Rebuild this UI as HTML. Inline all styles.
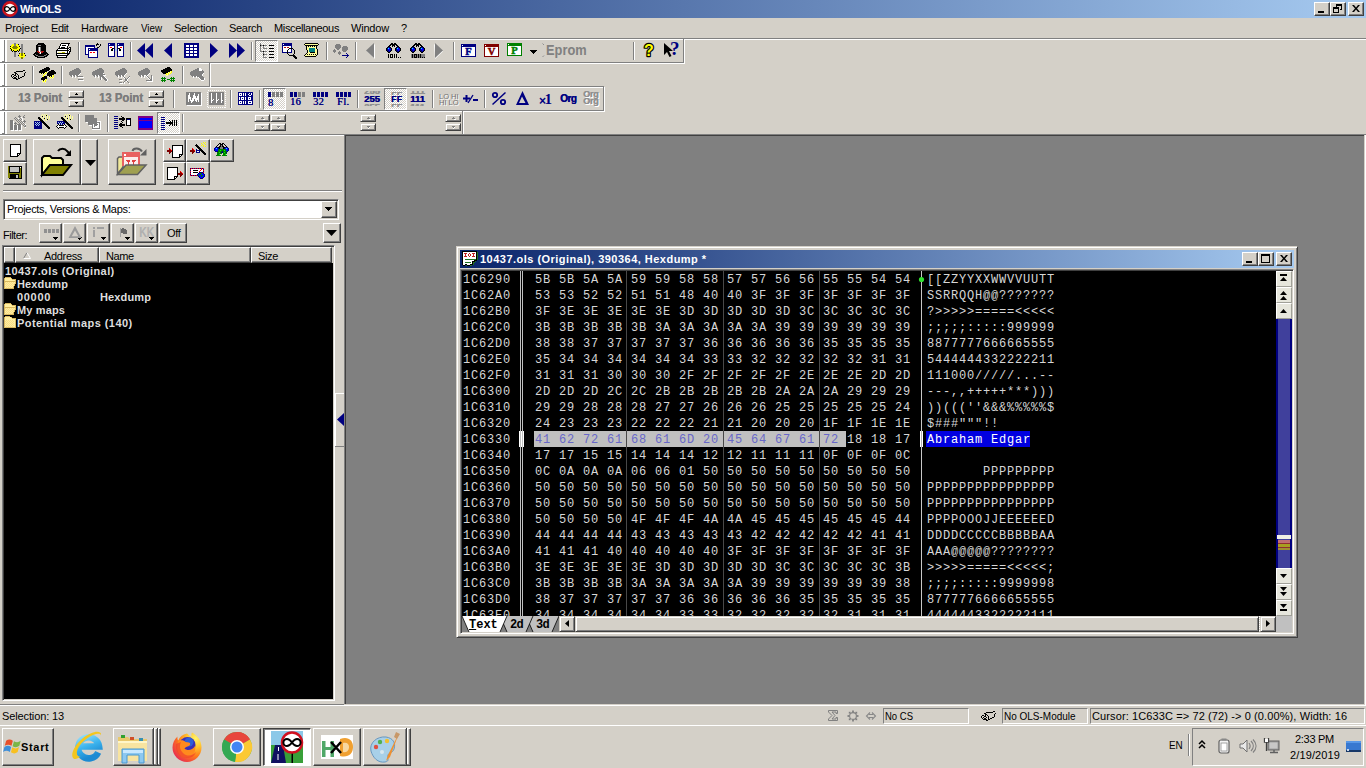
<!DOCTYPE html>
<html><head><meta charset="utf-8"><title>WinOLS</title>
<style>
*{box-sizing:border-box;margin:0;padding:0}
html,body{width:1366px;height:768px;overflow:hidden;background:#d4d0c8;font-family:"Liberation Sans",sans-serif;font-size:11px;color:#000}
.a{position:absolute}
.t{position:absolute;white-space:nowrap;line-height:13px}
.btn{position:absolute;background:#d4d0c8;border:1px solid;border-color:#fff #404040 #404040 #fff;box-shadow:inset -1px -1px 0 #808080}
.sb{position:absolute;background:#d4d0c8;border:1px solid;border-color:#d4d0c8 #404040 #404040 #d4d0c8;box-shadow:inset 1px 1px 0 #fff,inset -1px -1px 0 #808080}
.vb{position:absolute;background:#e6e6dc;border:1px solid;border-color:#fff #a0a098 #a0a098 #fff}
.sunk{position:absolute;border:1px solid;border-color:#808080 #fff #fff #808080;box-shadow:inset 1px 1px 0 #404040,inset -1px -1px 0 #d4d0c8}
.sunk1{position:absolute;border:1px solid;border-color:#808080 #fff #fff #808080}
.prs{position:absolute;border:1px solid;border-color:#808080 #fff #fff #808080;background-image:conic-gradient(#fff 25%,#d4d0c8 0 50%,#fff 0 75%,#d4d0c8 0);background-size:2px 2px}
.mono{font-family:"Liberation Mono",monospace;font-size:12px;letter-spacing:0.8px;line-height:16px;white-space:pre;position:absolute;color:#d6d6d6}
svg{position:absolute;overflow:visible}
</style></head><body>

<!-- TITLE BAR -->
<div class="a" style="left:0px;top:0px;width:1366px;height:18px;background:#0a246a;background:linear-gradient(90deg,#0a246a 0%,#a6caf0 100%);"></div>
<svg style="left:2px;top:1px;" width="16" height="16" viewBox="0 0 16 16"><circle cx="8" cy="8" r="6.6" fill="#fff" stroke="#c8141e" stroke-width="2.6"/><path d="M8 8c-1.2-1.7-2-2.3-3.1-2.3a2.3 2.3 0 0 0 0 4.6c1.1 0 1.9-.6 3.1-2.3c1.200 1.700 2 2.300 3.100 2.300a2.300 2.300 0 0 0 0-4.600c-1.100 0-1.900.600-3.100 2.300z" fill="none" stroke="#000" stroke-width="1.3"/></svg>
<div class="t" style="left:20px;top:3px;font-weight:bold;color:#fff;letter-spacing:-0.28px;">WinOLS</div>
<div class="btn" style="left:1314px;top:2px;width:16px;height:14px;"></div>
<div class="btn" style="left:1330px;top:2px;width:16px;height:14px;"></div>
<div class="btn" style="left:1348px;top:2px;width:16px;height:14px;"></div>
<div class="a" style="left:1318px;top:11px;width:6px;height:2px;background:#000;"></div>
<svg style="left:1333px;top:4px;" width="9" height="9" viewBox="0 0 9 9" shape-rendering="crispEdges"><path d="M3 0h6v6h-2v-1h1v-3h-4v1h-1z" fill="#000"/><path d="M0 3h6v6h-6zM1 5v3h4v-3z" fill="#000" fill-rule="evenodd"/></svg>
<svg style="left:1352px;top:5px;" width="8" height="7" viewBox="0 0 8 7"><path d="M0 0h2l2 2.500l2-2.500h2l-3 3.500l3 3.500h-2l-2-2.500l-2 2.500h-2l3-3.500z" fill="#000"/></svg>
<!-- MENU BAR -->
<div class="t" style="left:5px;top:22px;letter-spacing:-0.11px;">Project</div>
<div class="t" style="left:51px;top:22px;letter-spacing:-0.36px;">Edit</div>
<div class="t" style="left:81px;top:22px;letter-spacing:-0.09px;">Hardware</div>
<div class="t" style="left:141px;top:22px;transform:scaleX(0.888);transform-origin:0 0;">View</div>
<div class="t" style="left:174px;top:22px;letter-spacing:-0.25px;">Selection</div>
<div class="t" style="left:229px;top:22px;letter-spacing:-0.31px;">Search</div>
<div class="t" style="left:274px;top:22px;letter-spacing:-0.36px;">Miscellaneous</div>
<div class="t" style="left:351px;top:22px;letter-spacing:-0.19px;">Window</div>
<div class="t" style="left:401px;top:22px;">?</div>
<!-- TOOLBAR FRAMES -->
<div class="a" style="left:0px;top:39px;width:7px;height:95px;background:#fff;"></div>
<div class="a" style="left:0px;top:38px;width:1366px;height:1px;background:#808080;"></div>
<div class="a" style="left:0px;top:39px;width:1366px;height:1px;background:#fff;"></div>
<div class="a" style="left:0px;top:62px;width:684px;height:1px;background:#808080;"></div>
<div class="a" style="left:0px;top:63px;width:685px;height:1px;background:#fff;"></div>
<div class="a" style="left:0px;top:86px;width:604px;height:1px;background:#808080;"></div>
<div class="a" style="left:0px;top:87px;width:605px;height:1px;background:#fff;"></div>
<div class="a" style="left:0px;top:110px;width:604px;height:1px;background:#808080;"></div>
<div class="a" style="left:0px;top:111px;width:605px;height:1px;background:#fff;"></div>
<div class="a" style="left:4px;top:40px;width:1px;height:22px;background:#808080;"></div>
<div class="a" style="left:4px;top:64px;width:1px;height:22px;background:#808080;"></div>
<div class="a" style="left:4px;top:88px;width:1px;height:22px;background:#808080;"></div>
<div class="a" style="left:4px;top:112px;width:1px;height:22px;background:#808080;"></div>
<div class="a" style="left:2px;top:61px;width:3px;height:1px;background:#808080;"></div>
<div class="a" style="left:2px;top:85px;width:3px;height:1px;background:#808080;"></div>
<div class="a" style="left:2px;top:109px;width:3px;height:1px;background:#808080;"></div>
<div class="a" style="left:2px;top:133px;width:3px;height:1px;background:#808080;"></div>
<div class="a" style="left:683px;top:39px;width:1px;height:24px;background:#808080;"></div>
<div class="a" style="left:684px;top:39px;width:1px;height:25px;background:#fff;"></div>
<div class="a" style="left:209px;top:63px;width:1px;height:24px;background:#808080;"></div>
<div class="a" style="left:210px;top:63px;width:1px;height:25px;background:#fff;"></div>
<div class="a" style="left:603px;top:87px;width:1px;height:24px;background:#808080;"></div>
<div class="a" style="left:604px;top:87px;width:1px;height:25px;background:#fff;"></div>
<div class="a" style="left:462px;top:111px;width:1px;height:23px;background:#808080;"></div>
<div class="a" style="left:463px;top:111px;width:1px;height:23px;background:#fff;"></div>
<!-- TOOLBAR 1 -->
<svg style="left:10px;top:43px;" width="16" height="16" viewBox="0 0 16 16" shape-rendering="crispEdges"><path stroke="#808080" d="M4 0.5h2M4 1.5h2M11 1.5h2M4 2.5h2M11 2.5h2M11 3.5h2M11 4.5h2M11 5.5h2M11 6.5h2M11 7.5h2M11 8.5h2M4 9.5h2M11 9.5h2M4 10.5h2M4 11.5h2M4 12.5h2M4 13.5h2"/><path stroke="#ffff00" d="M2 1.5h2M6 1.5h2M1 2.5h3M6 2.5h3M1 3.5h2M7 3.5h2M0 4.5h2M8 4.5h2M1 5.5h2M7 5.5h3M0 6.5h1M2 6.5h7M2 7.5h1M4 7.5h3M8 7.5h1M10 10.5h1M13 10.5h1M9 11.5h2M13 11.5h2M9 12.5h2M13 12.5h2M9 13.5h6M10 14.5h1M13 14.5h1"/><path stroke="#000" d="M8 1.5h1M0 3.5h1M9 3.5h1M0 5.5h1M10 5.5h1M1 6.5h1M9 6.5h1M1 7.5h1M3 7.5h1M7 7.5h1M9 7.5h1M2 8.5h1M4 8.5h3M8 8.5h1M9 10.5h1M14 10.5h1M8 12.5h1M15 12.5h1"/><path stroke="#808000" d="M3 3.5h4M2 4.5h6M3 5.5h4M11 10.5h2M11 11.5h2M11 12.5h2M11 14.5h2M11 15.5h2"/></svg>
<svg style="left:33px;top:43px;" width="16" height="15" viewBox="0 0 16 15" shape-rendering="crispEdges"><path stroke="#000" d="M5 0.5h6M4 1.5h8M3 2.5h2M8 2.5h5M3 3.5h10M3 4.5h2M8 4.5h5M3 5.5h2M8 5.5h5M3 6.5h2M8 6.5h5M3 7.5h2M8 7.5h5M3 8.5h1M11 8.5h2M2 9.5h3M10 9.5h4M1 10.5h5M8 10.5h7M0 11.5h2M3 11.5h10M14 11.5h2M1 12.5h2M5 12.5h6M13 12.5h2M2 13.5h3M11 13.5h3M4 14.5h8"/><path stroke="#808080" d="M5 2.5h3M5 4.5h1M7 4.5h1M5 5.5h1M7 5.5h1M5 6.5h1M7 6.5h1M5 7.5h1M7 7.5h1M7 8.5h1M6 10.5h1M2 11.5h1M13 11.5h1M3 12.5h2M11 12.5h2M5 13.5h6"/><path stroke="#fff" d="M6 4.5h1M6 5.5h1M6 6.5h1M6 7.5h1M6 8.5h1M7 9.5h1M7 10.5h1"/><path stroke="#b01010" d="M4 8.5h2M8 8.5h3M5 9.5h2M8 9.5h2"/></svg>
<svg style="left:56px;top:43px;" width="16" height="15" viewBox="0 0 16 15" shape-rendering="crispEdges"><path stroke="#000" d="M5 0.5h9M4 1.5h1M12 1.5h1M4 2.5h1M6 2.5h4M12 2.5h1M3 3.5h1M11 3.5h1M3 4.5h1M5 4.5h4M11 4.5h1M13 4.5h2M2 5.5h11M14 5.5h1M1 6.5h1M11 6.5h1M13 6.5h2M0 7.5h13M14 7.5h1M0 8.5h1M11 8.5h1M13 8.5h2M0 9.5h1M11 9.5h1M13 9.5h1M0 10.5h14M0 11.5h1M11 11.5h2M0 12.5h12M1 13.5h1M10 13.5h1M1 14.5h10"/><path stroke="#fff" d="M5 1.5h7M5 2.5h1M10 2.5h2M4 3.5h7M4 4.5h1M9 4.5h2M13 5.5h1M2 6.5h9M12 6.5h1M13 7.5h1M1 8.5h10M12 8.5h1M1 9.5h1M9 9.5h2M12 9.5h1M1 11.5h10M2 13.5h8"/><path stroke="#ffff99" d="M2 9.5h4"/><path stroke="#c0c000" d="M6 9.5h3"/></svg>
<div class="a" style="left:78px;top:42px;width:1px;height:18px;background:#808080;"></div><div class="a" style="left:79px;top:42px;width:1px;height:18px;background:#fff;"></div>
<svg style="left:85px;top:43px;" width="16" height="15" viewBox="0 0 16 15" shape-rendering="crispEdges"><path stroke="#000" d="M12 0.5h1M11 1.5h3M15 1.5h1M11 2.5h1M15 2.5h1M14 3.5h1M12 4.5h2"/><path stroke="#000080" d="M0 2.5h10M0 3.5h10M0 4.5h1M9 4.5h1M0 5.5h1M3 5.5h10M0 6.5h1M3 6.5h1M5 6.5h8M0 7.5h1M3 7.5h10M0 8.5h1M3 8.5h1M12 8.5h1M0 9.5h1M3 9.5h1M12 9.5h1M0 10.5h1M3 10.5h1M12 10.5h1M0 11.5h4M12 11.5h1M3 12.5h1M12 12.5h1M3 13.5h1M12 13.5h1M3 14.5h10"/><path stroke="#fff" d="M1 4.5h8M1 5.5h2M1 6.5h2M4 6.5h1M1 7.5h2M1 8.5h2M4 8.5h8M1 9.5h2M4 9.5h1M7 9.5h1M10 9.5h2M1 10.5h2M4 10.5h8M4 11.5h8M4 12.5h8M4 13.5h8"/><path stroke="#ff0000" d="M5 9.5h2M8 9.5h2"/></svg>
<svg style="left:108px;top:43px;" width="16" height="14" viewBox="0 0 16 14" shape-rendering="crispEdges"><path stroke="#000080" d="M0 0.5h7M9 0.5h7M0 1.5h1M2 1.5h5M9 1.5h1M11 1.5h5M0 2.5h7M9 2.5h7M0 3.5h1M6 3.5h1M9 3.5h1M15 3.5h1M0 4.5h1M6 4.5h1M9 4.5h1M15 4.5h1M0 5.5h1M6 5.5h1M9 5.5h1M15 5.5h1M0 6.5h1M6 6.5h1M9 6.5h1M15 6.5h1M0 7.5h1M6 7.5h1M9 7.5h1M15 7.5h1M0 8.5h1M6 8.5h1M9 8.5h1M15 8.5h1M0 9.5h1M6 9.5h1M9 9.5h1M15 9.5h1M0 10.5h1M6 10.5h1M9 10.5h1M15 10.5h1M0 11.5h1M6 11.5h1M9 11.5h1M15 11.5h1M0 12.5h1M6 12.5h1M9 12.5h1M15 12.5h1M0 13.5h7M9 13.5h7"/><path stroke="#fff" d="M1 1.5h1M10 1.5h1M1 3.5h5M10 3.5h5M1 4.5h1M4 4.5h2M10 4.5h2M14 4.5h1M1 5.5h3M12 5.5h3M1 6.5h2M5 6.5h1M10 6.5h1M13 6.5h2M1 7.5h2M5 7.5h1M10 7.5h1M13 7.5h2M1 8.5h5M10 8.5h5M1 9.5h5M10 9.5h5M1 10.5h5M10 10.5h5M1 11.5h5M10 11.5h5M1 12.5h5M10 12.5h5"/><path stroke="#ff0000" d="M2 4.5h2M12 4.5h2"/><path stroke="#000" d="M4 5.5h2M10 5.5h2M3 6.5h2M11 6.5h2M3 7.5h2M11 7.5h2"/><path stroke="#a6caf0" d="M7 6.5h2M7 7.5h2"/></svg>
<div class="a" style="left:130px;top:42px;width:1px;height:18px;background:#808080;"></div><div class="a" style="left:131px;top:42px;width:1px;height:18px;background:#fff;"></div>
<svg style="left:137px;top:43px;" width="16" height="15" viewBox="0 0 16 15"><polygon points="8,0 8,15 0,7.5" fill="#000080"/><polygon points="16,0 16,15 8,7.5" fill="#000080"/></svg>
<svg style="left:164px;top:43px;" width="8" height="15" viewBox="0 0 8 15"><polygon points="8,0 8,15 0,7.5" fill="#000080"/></svg>
<svg style="left:184px;top:43px;" width="15" height="15" viewBox="0 0 15 15" shape-rendering="crispEdges"><rect width="15" height="15" fill="#000080"/><rect x="2" y="2" width="3" height="2" fill="#fff"/><rect x="2" y="5" width="3" height="2" fill="#fff"/><rect x="2" y="8" width="3" height="2" fill="#fff"/><rect x="2" y="11" width="3" height="2" fill="#fff"/><rect x="6" y="2" width="3" height="2" fill="#fff"/><rect x="6" y="5" width="3" height="2" fill="#fff"/><rect x="6" y="8" width="3" height="2" fill="#fff"/><rect x="6" y="11" width="3" height="2" fill="#fff"/><rect x="10" y="2" width="3" height="2" fill="#fff"/><rect x="10" y="5" width="3" height="2" fill="#fff"/><rect x="10" y="8" width="3" height="2" fill="#fff"/><rect x="10" y="11" width="3" height="2" fill="#fff"/></svg>
<svg style="left:210px;top:43px;" width="8" height="15" viewBox="0 0 8 15"><polygon points="0,0 0,15 8,7.5" fill="#000080"/></svg>
<svg style="left:229px;top:43px;" width="16" height="15" viewBox="0 0 16 15"><polygon points="0,0 0,15 8,7.5" fill="#000080"/><polygon points="8,0 8,15 16,7.5" fill="#000080"/></svg>
<div class="a" style="left:251px;top:42px;width:1px;height:18px;background:#808080;"></div><div class="a" style="left:252px;top:42px;width:1px;height:18px;background:#fff;"></div>
<div class="prs" style="left:255px;top:40px;width:23px;height:22px;"></div>
<svg style="left:259px;top:43px;" width="16" height="15" viewBox="0 0 16 15" shape-rendering="crispEdges"><path stroke="#808080" d="M1 0.5h1M1 1.5h1M2 2.5h2M5 2.5h3M1 3.5h1M4 3.5h1M1 4.5h1M4 4.5h1M1 5.5h1M4 5.5h4M1 6.5h1M1 7.5h1M1 8.5h3M5 8.5h3M4 9.5h1M4 10.5h1M5 11.5h3M4 12.5h1M4 13.5h1M4 14.5h4"/><path stroke="#000" d="M1 2.5h1M4 2.5h1M10 2.5h5M10 5.5h5M4 8.5h1M10 8.5h5M4 11.5h1M10 11.5h5M10 14.5h5"/></svg>
<svg style="left:282px;top:43px;" width="16" height="16" viewBox="0 0 16 16" shape-rendering="crispEdges"><path stroke="#000080" d="M0 0.5h10M0 1.5h1M2 1.5h8M0 2.5h10M0 3.5h1M9 3.5h1M0 4.5h1M9 4.5h1M0 5.5h1M0 6.5h1M9 6.5h1M0 7.5h1M9 7.5h1M0 8.5h1M9 8.5h1M0 9.5h5M6 9.5h4"/><path stroke="#fff" d="M1 1.5h1M1 3.5h8M1 4.5h1M4 4.5h1M7 4.5h2M1 5.5h6M1 6.5h5M7 6.5h2M1 7.5h4M6 7.5h3M1 8.5h4M6 8.5h3"/><path stroke="#b01010" d="M2 4.5h2M5 4.5h2"/><path stroke="#000" d="M7 5.5h4M6 6.5h1M11 6.5h1M5 7.5h1M12 7.5h1M5 8.5h1M12 8.5h1M5 9.5h1M12 9.5h1M5 10.5h1M12 10.5h1M6 11.5h1M11 11.5h1M7 12.5h6M11 13.5h3M12 14.5h3M13 15.5h2"/></svg>
<svg style="left:304px;top:43px;" width="16" height="14" viewBox="0 0 16 14" shape-rendering="crispEdges"><path stroke="#000" d="M1 0.5h13M0 1.5h1M14 1.5h1M1 2.5h13M2 3.5h1M4 3.5h1M6 3.5h1M8 3.5h1M10 3.5h1M12 3.5h1M2 4.5h1M12 4.5h1M2 5.5h1M12 5.5h1M2 6.5h1M13 6.5h1M3 7.5h1M13 7.5h1M3 8.5h1M13 8.5h1M3 9.5h1M6 9.5h5M13 9.5h1M2 10.5h1M13 10.5h1M1 11.5h1M3 11.5h1M5 11.5h1M7 11.5h1M9 11.5h1M11 11.5h1M13 11.5h1M0 12.5h1M12 12.5h1M1 13.5h11"/><path stroke="#ffff99" d="M1 1.5h13M3 3.5h1M5 3.5h1M7 3.5h1M9 3.5h1M11 3.5h1M3 4.5h9M3 5.5h2M11 5.5h1M3 6.5h2M11 6.5h2M4 7.5h1M11 7.5h2M4 8.5h1M11 8.5h2M4 9.5h2M11 9.5h2M3 10.5h10M2 11.5h1M4 11.5h1M6 11.5h1M8 11.5h1M10 11.5h1M12 11.5h1M1 12.5h11"/><path stroke="#008080" d="M5 5.5h6M5 6.5h6M5 7.5h6M5 8.5h6"/></svg>
<div class="a" style="left:326px;top:42px;width:1px;height:18px;background:#808080;"></div><div class="a" style="left:327px;top:42px;width:1px;height:18px;background:#fff;"></div>
<svg style="left:333px;top:43px;" width="16" height="15" viewBox="0 0 16 15" shape-rendering="crispEdges"><path stroke="#808080" d="M3 1.5h4M2 2.5h6M2 3.5h6M10 3.5h4M2 4.5h6M9 4.5h6M3 5.5h4M9 5.5h6M1 6.5h1M4 6.5h2M9 6.5h6M0 7.5h3M9 7.5h5M0 8.5h3M6 8.5h1M10 8.5h3M1 9.5h1M5 9.5h3M5 10.5h3M6 11.5h1"/><path stroke="#000080" d="M13 10.5h1M14 11.5h1M9 12.5h7M14 13.5h1M13 14.5h1"/></svg>
<div class="a" style="left:355px;top:42px;width:1px;height:18px;background:#808080;"></div><div class="a" style="left:356px;top:42px;width:1px;height:18px;background:#fff;"></div>
<svg style="left:366px;top:43px;" width="10" height="16" viewBox="0 0 10 16"><polygon points="9,1 9,16 1,8.5" fill="#fff"/><polygon points="8,0 8,15 0,7.5" fill="#808080"/></svg>
<svg style="left:385px;top:43px;" width="16" height="10" viewBox="0 0 16 10" shape-rendering="crispEdges"><path stroke="#000" d="M6 0.5h2M9 0.5h2M5 1.5h7M4 2.5h2M7 2.5h3M11 2.5h2M3 3.5h2M7 3.5h1M9 3.5h1M12 3.5h2M2 4.5h1M5 4.5h1M11 4.5h1M14 4.5h1M1 5.5h1M6 5.5h1M10 5.5h1M15 5.5h1M1 6.5h1M6 6.5h1M10 6.5h1M15 6.5h1M1 7.5h1M6 7.5h1M10 7.5h1M15 7.5h1M2 8.5h1M5 8.5h1M11 8.5h1M14 8.5h1M3 9.5h2M12 9.5h2"/><path stroke="#000080" d="M3 4.5h2M12 4.5h2M2 5.5h1M5 5.5h1M11 5.5h1M14 5.5h1M2 6.5h1M11 6.5h1M2 7.5h2M5 7.5h1M11 7.5h2M14 7.5h1M3 8.5h2M12 8.5h2"/><path stroke="#00ffff" d="M3 5.5h1M12 5.5h1"/><path stroke="#0000ff" d="M4 5.5h1M13 5.5h1M3 6.5h3M12 6.5h3M4 7.5h1M13 7.5h1"/></svg>
<svg style="left:388px;top:54px;" width="14" height="4" viewBox="0 0 14 4" shape-rendering="crispEdges"><path stroke="#000" d="M0 0.5h1M2 0.5h3M6 0.5h1M8 0.5h1M0 1.5h1M2 1.5h1M4 1.5h1M6 1.5h1M8 1.5h1M0 2.5h1M2 2.5h1M4 2.5h1M6 2.5h1M8 2.5h1M0 3.5h1M2 3.5h3M6 3.5h1M8 3.5h1M10 3.5h1M12 3.5h1"/></svg>
<svg style="left:409px;top:43px;" width="16" height="10" viewBox="0 0 16 10" shape-rendering="crispEdges"><path stroke="#000" d="M6 0.5h2M9 0.5h2M5 1.5h7M4 2.5h2M7 2.5h3M11 2.5h2M3 3.5h2M7 3.5h1M9 3.5h1M12 3.5h2M2 4.5h1M5 4.5h1M11 4.5h1M14 4.5h1M1 5.5h1M6 5.5h1M10 5.5h1M15 5.5h1M1 6.5h1M6 6.5h1M10 6.5h1M15 6.5h1M1 7.5h1M6 7.5h1M10 7.5h1M15 7.5h1M2 8.5h1M5 8.5h1M11 8.5h1M14 8.5h1M3 9.5h2M12 9.5h2"/><path stroke="#000080" d="M3 4.5h2M12 4.5h2M2 5.5h1M5 5.5h1M11 5.5h1M14 5.5h1M2 6.5h1M11 6.5h1M2 7.5h2M5 7.5h1M11 7.5h2M14 7.5h1M3 8.5h2M12 8.5h2"/><path stroke="#00ffff" d="M3 5.5h1M12 5.5h1"/><path stroke="#0000ff" d="M4 5.5h1M13 5.5h1M3 6.5h3M12 6.5h3M4 7.5h1M13 7.5h1"/></svg>
<div class="a" style="left:411px;top:54px;width:14px;height:4px;background:#808080;"></div>
<svg style="left:412px;top:54px;" width="14" height="4" viewBox="0 0 14 4" shape-rendering="crispEdges"><path stroke="#000" d="M0 0.5h1M2 0.5h3M6 0.5h1M8 0.5h1M0 1.5h1M2 1.5h1M4 1.5h1M6 1.5h1M8 1.5h1M0 2.5h1M2 2.5h1M4 2.5h1M6 2.5h1M8 2.5h1M0 3.5h1M2 3.5h3M6 3.5h1M8 3.5h1M10 3.5h1M12 3.5h1"/></svg>
<svg style="left:434px;top:43px;" width="10" height="16" viewBox="0 0 10 16"><polygon points="0,1 1,16 9,8.5" fill="#fff"/><polygon points="1,0 1,15 9,7.5" fill="#808080"/></svg>
<div class="a" style="left:453px;top:42px;width:1px;height:18px;background:#808080;"></div><div class="a" style="left:454px;top:42px;width:1px;height:18px;background:#fff;"></div>
<svg style="left:461px;top:44px;" width="15" height="13" viewBox="0 0 15 13" shape-rendering="crispEdges"><rect x="0" y="0" width="15" height="13" fill="#000080"/><rect x="1" y="3" width="13" height="9" fill="#fff"/><rect x="1" y="1" width="1" height="1" fill="#fff"/><text x="7.5" y="11.3" text-anchor="middle" font-family="Liberation Serif,serif" font-weight="bold" font-size="10.5" fill="#000080" stroke="#000080" stroke-width="0.5">F</text></svg>
<svg style="left:484px;top:44px;" width="15" height="13" viewBox="0 0 15 13" shape-rendering="crispEdges"><rect x="0" y="0" width="15" height="13" fill="#800000"/><rect x="1" y="3" width="13" height="9" fill="#fff"/><rect x="1" y="1" width="1" height="1" fill="#fff"/><text x="7.5" y="11.3" text-anchor="middle" font-family="Liberation Serif,serif" font-weight="bold" font-size="10.5" fill="#800000" stroke="#800000" stroke-width="0.5">V</text></svg>
<svg style="left:507px;top:43px;" width="15" height="13" viewBox="0 0 15 13" shape-rendering="crispEdges"><rect x="0" y="0" width="15" height="13" fill="#008000"/><rect x="1" y="3" width="13" height="9" fill="#fff"/><rect x="1" y="1" width="1" height="1" fill="#fff"/><text x="7.5" y="11.3" text-anchor="middle" font-family="Liberation Serif,serif" font-weight="bold" font-size="10.5" fill="#008000" stroke="#008000" stroke-width="0.5">P</text></svg>
<svg style="left:530px;top:50px;" width="7" height="4" viewBox="0 0 7 4" shape-rendering="crispEdges"><path d="M0 0h7v1h-1v1h-1v1h-1v1h-1v-1h-1v-1h-1v-1h-1z" fill="#000"/></svg>
<div class="t" style="left:546px;top:42px;font-size:14px;line-height:16px;font-weight:bold;color:#808080;transform:scaleX(0.916);transform-origin:0 0;">Eprom</div>
<svg style="left:542px;top:43px;" width="3" height="15" viewBox="0 0 3 15"><path d="M0.500 0.500l1.500 1.500M2 12.500l-1.500 1.500" fill="none" stroke="#909090" stroke-width="1"/></svg>
<div class="a" style="left:633px;top:42px;width:1px;height:18px;background:#808080;"></div><div class="a" style="left:634px;top:42px;width:1px;height:18px;background:#fff;"></div>
<svg style="left:643px;top:43px;" width="12" height="16" viewBox="0 0 12 16"><text x="1" y="13" font-family="Liberation Sans,sans-serif" font-weight="bold" font-size="16" fill="#ffff00" stroke="#000" stroke-width="2.400" stroke-linejoin="round" paint-order="stroke">?</text></svg>
<svg style="left:664px;top:43px;" width="9" height="15" viewBox="0 0 9 15"><path d="M0 0v12l3-3l2.500 5l2-1l-2.500-5h4z" fill="#000"/></svg>
<svg style="left:670px;top:42px;" width="10" height="14" viewBox="0 0 10 14"><text x="0" y="12.500" font-family="Liberation Serif,serif" font-weight="bold" font-size="19" fill="#000080">?</text></svg>
<!-- TOOLBAR 2 -->
<svg style="left:11px;top:70px;" width="16" height="10" viewBox="0 0 16 10" shape-rendering="crispEdges"><path stroke="#000" d="M12 0.5h2M5 1.5h7M3 2.5h2M14 2.5h1M4 3.5h2M13 3.5h1M1 4.5h2M4 4.5h1M6 4.5h1M13 4.5h1M0 5.5h1M3 5.5h2M7 5.5h1M13 5.5h1M0 6.5h1M2 6.5h1M5 6.5h1M7 6.5h1M11 6.5h2M1 7.5h1M3 7.5h2M7 7.5h1M9 7.5h2M2 8.5h4M7 8.5h2M5 9.5h2"/></svg>
<div class="a" style="left:32px;top:66px;width:1px;height:18px;background:#808080;"></div><div class="a" style="left:33px;top:66px;width:1px;height:18px;background:#fff;"></div>
<svg style="left:39px;top:67px;" width="17" height="16" viewBox="0 0 17 16" shape-rendering="crispEdges"><path stroke="#000" d="M7 0.5h3M5 1.5h6M3 2.5h8M1 3.5h9M12 3.5h3M0 4.5h8M10 4.5h6M0 5.5h6M9 5.5h8M2 6.5h1M4 6.5h1M8 6.5h9M8 7.5h7M8 8.5h5M5 9.5h3M10 9.5h1M12 9.5h1M3 10.5h5M2 11.5h6M2 12.5h4M4 13.5h1"/><path stroke="#ffff99" d="M6 5.5h1M1 6.5h1M3 6.5h1M5 6.5h1M7 6.5h1M2 7.5h1M4 7.5h1M6 7.5h1M5 8.5h1M13 8.5h1M3 9.5h1M9 9.5h1M11 9.5h1M13 9.5h1M10 10.5h1M12 10.5h1M14 10.5h1M11 11.5h1M13 11.5h1M6 12.5h1M3 13.5h1M5 13.5h1M7 13.5h1M3 14.5h1M5 14.5h1M4 15.5h1M6 15.5h1"/><path stroke="#ffff00" d="M7 5.5h1M6 6.5h1M5 7.5h1M4 8.5h1M14 8.5h1M4 9.5h1M14 9.5h1M11 10.5h1M13 10.5h1M7 12.5h1M6 13.5h1M4 14.5h1M6 14.5h1"/></svg>
<div class="a" style="left:61px;top:66px;width:1px;height:18px;background:#808080;"></div><div class="a" style="left:62px;top:66px;width:1px;height:18px;background:#fff;"></div>
<svg style="left:69px;top:68px;" width="12" height="10" viewBox="0 0 12 10" shape-rendering="crispEdges"><path stroke="#808080" d="M7 0.5h3M5 1.5h6M3 2.5h9M1 3.5h11M0 4.5h12M0 5.5h11M0 6.5h10M1 7.5h2M4 7.5h2M7 7.5h2M2 8.5h1M5 8.5h1M8 8.5h1"/><path stroke="#fff" d="M11 5.5h1M10 6.5h1M3 7.5h1M6 7.5h1M9 7.5h1M3 8.5h1M6 8.5h1M9 8.5h1M3 9.5h1M6 9.5h1M9 9.5h1"/></svg>
<svg style="left:78px;top:76px;" width="6" height="5" viewBox="0 0 6 5" shape-rendering="crispEdges"><path stroke="#808080" d="M0 0.5h5M0 3.5h5"/><path stroke="#fff" d="M1 1.5h5M1 4.5h5"/></svg>
<svg style="left:92px;top:68px;" width="12" height="10" viewBox="0 0 12 10" shape-rendering="crispEdges"><path stroke="#808080" d="M7 0.5h3M5 1.5h6M3 2.5h9M1 3.5h11M0 4.5h12M0 5.5h11M0 6.5h10M1 7.5h2M4 7.5h2M7 7.5h2M2 8.5h1M5 8.5h1M8 8.5h1"/><path stroke="#fff" d="M11 5.5h1M10 6.5h1M3 7.5h1M6 7.5h1M9 7.5h1M3 8.5h1M6 8.5h1M9 8.5h1M3 9.5h1M6 9.5h1M9 9.5h1"/></svg>
<svg style="left:100px;top:74px;" width="8" height="8" viewBox="0 0 8 8" shape-rendering="crispEdges"><path stroke="#808080" d="M0 0.5h5M0 1.5h3M0 2.5h4M0 3.5h1M2 3.5h3M0 4.5h1M3 4.5h3M0 5.5h1M4 5.5h3M5 6.5h2"/><path stroke="#fff" d="M3 1.5h3M4 2.5h1M1 3.5h1M5 3.5h1M1 4.5h1M6 4.5h1M1 5.5h1M7 5.5h1M7 6.5h1M6 7.5h1"/></svg>
<svg style="left:115px;top:68px;" width="12" height="10" viewBox="0 0 12 10" shape-rendering="crispEdges"><path stroke="#808080" d="M7 0.5h3M5 1.5h6M3 2.5h9M1 3.5h11M0 4.5h12M0 5.5h11M0 6.5h10M1 7.5h2M4 7.5h2M7 7.5h2M2 8.5h1M5 8.5h1M8 8.5h1"/><path stroke="#fff" d="M11 5.5h1M10 6.5h1M3 7.5h1M6 7.5h1M9 7.5h1M3 8.5h1M6 8.5h1M9 8.5h1M3 9.5h1M6 9.5h1M9 9.5h1"/></svg>
<svg style="left:119px;top:76px;" width="11" height="8" viewBox="0 0 11 8" shape-rendering="crispEdges"><path stroke="#808080" d="M4 0.5h1M10 0.5h1M5 1.5h1M9 1.5h1M6 2.5h1M8 2.5h1M0 3.5h3M6 3.5h2M6 4.5h2M5 5.5h1M8 5.5h1M0 6.5h3M4 6.5h1M9 6.5h1"/><path stroke="#fff" d="M4 1.5h1M10 1.5h1M5 2.5h1M9 2.5h1M8 3.5h1M1 4.5h3M8 4.5h1M7 5.5h1M5 6.5h1M1 7.5h3M5 7.5h1M10 7.5h1"/></svg>
<svg style="left:138px;top:68px;" width="12" height="10" viewBox="0 0 12 10" shape-rendering="crispEdges"><path stroke="#808080" d="M7 0.5h3M5 1.5h6M3 2.5h9M1 3.5h11M0 4.5h12M0 5.5h11M0 6.5h10M1 7.5h2M4 7.5h2M7 7.5h2M2 8.5h1M5 8.5h1M8 8.5h1"/><path stroke="#fff" d="M11 5.5h1M10 6.5h1M3 7.5h1M6 7.5h1M9 7.5h1M3 8.5h1M6 8.5h1M9 8.5h1M3 9.5h1M6 9.5h1M9 9.5h1"/></svg>
<svg style="left:145px;top:74px;" width="8" height="8" viewBox="0 0 8 8" shape-rendering="crispEdges"><path stroke="#808080" d="M0 0.5h1M1 1.5h1M6 1.5h1M2 2.5h1M6 2.5h1M3 3.5h1M6 3.5h1M4 4.5h1M6 4.5h1M5 5.5h2M1 6.5h6"/><path stroke="#fff" d="M0 1.5h1M1 2.5h1M7 2.5h1M2 3.5h1M7 3.5h1M3 4.5h1M7 4.5h1M4 5.5h1M7 5.5h1M7 6.5h1M2 7.5h6"/></svg>
<svg style="left:161px;top:67px;" width="12" height="9" viewBox="0 0 12 9" shape-rendering="crispEdges"><path stroke="#000" d="M6 0.5h3M4 1.5h6M2 2.5h9M0 3.5h11M0 4.5h9M1 5.5h6M2 6.5h3"/><path stroke="#ffff99" d="M9 4.5h1M7 5.5h1M9 5.5h1M6 6.5h1M8 6.5h1M4 7.5h1M6 7.5h1M5 8.5h2"/><path stroke="#ffff00" d="M10 4.5h1M8 5.5h1M10 5.5h1M5 6.5h1M7 6.5h1M9 6.5h1M5 7.5h1M7 7.5h1"/></svg>
<svg style="left:161px;top:77px;" width="16" height="5" viewBox="0 0 16 5" shape-rendering="crispEdges"><path stroke="#008000" d="M1 0.5h1M3 0.5h1M10 0.5h1M12 0.5h1M0 1.5h5M9 1.5h5M1 2.5h1M3 2.5h1M6 2.5h3M10 2.5h1M12 2.5h1M0 3.5h5M9 3.5h5M1 4.5h1M3 4.5h1M10 4.5h1M12 4.5h1"/></svg>
<div class="a" style="left:182px;top:66px;width:1px;height:18px;background:#808080;"></div><div class="a" style="left:183px;top:66px;width:1px;height:18px;background:#fff;"></div>
<svg style="left:190px;top:68px;" width="15" height="13" viewBox="0 0 15 13" shape-rendering="crispEdges"><path stroke="#808080" d="M7 0.5h2M5 1.5h4M3 2.5h6M12 2.5h1M1 3.5h13M0 4.5h14M0 5.5h13M0 6.5h12M1 7.5h11M2 8.5h1M4 8.5h2M7 8.5h6M9 9.5h5M10 10.5h4M11 11.5h3"/><path stroke="#fff" d="M9 0.5h2M9 1.5h3M9 2.5h3M13 5.5h1M12 6.5h1M12 7.5h1M3 8.5h1M6 8.5h1M3 9.5h1M6 9.5h1M8 9.5h1M9 10.5h1M14 10.5h1M10 11.5h1M14 11.5h1M11 12.5h3"/></svg>
<!-- TOOLBAR 3 -->
<div class="t" style="left:18px;top:90px;font-size:13px;line-height:15px;font-weight:bold;color:#7c7c7c;transform:scaleX(0.870);transform-origin:0 0;text-shadow:0.3px 0 0 #7c7c7c;">13 Point</div>
<div class="sb" style="left:68px;top:90px;width:16px;height:8px;"><svg style="left:0px;top:0px;left:0;top:0" width="14" height="6" viewBox="0 0 14 6" shape-rendering="crispEdges"><path d="M7 2h1v1h1v1h-3v-1h1z" fill="#000"/></svg></div><div class="sb" style="left:68px;top:99px;width:16px;height:8px;"><svg style="left:0px;top:0px;left:0;top:0" width="14" height="6" viewBox="0 0 14 6" shape-rendering="crispEdges"><path d="M6 2h3v1h-1v1h-1v-1h-1z" fill="#000"/></svg></div>
<div class="t" style="left:99px;top:90px;font-size:13px;line-height:15px;font-weight:bold;color:#7c7c7c;transform:scaleX(0.870);transform-origin:0 0;text-shadow:0.3px 0 0 #7c7c7c;">13 Point</div>
<div class="sb" style="left:148px;top:90px;width:16px;height:8px;"><svg style="left:0px;top:0px;left:0;top:0" width="14" height="6" viewBox="0 0 14 6" shape-rendering="crispEdges"><path d="M7 2h1v1h1v1h-3v-1h1z" fill="#000"/></svg></div><div class="sb" style="left:148px;top:99px;width:16px;height:8px;"><svg style="left:0px;top:0px;left:0;top:0" width="14" height="6" viewBox="0 0 14 6" shape-rendering="crispEdges"><path d="M6 2h3v1h-1v1h-1v-1h-1z" fill="#000"/></svg></div>
<div class="a" style="left:173px;top:90px;width:1px;height:18px;background:#808080;"></div><div class="a" style="left:174px;top:90px;width:1px;height:18px;background:#fff;"></div>
<svg style="left:186px;top:92px;" width="16" height="14" viewBox="0 0 16 14" shape-rendering="crispEdges"><path stroke="#808080" d="M0 0.5h15M0 1.5h3M4 1.5h4M9 1.5h6M0 2.5h3M4 2.5h4M9 2.5h3M13 2.5h2M0 3.5h2M4 3.5h3M9 3.5h3M13 3.5h2M0 4.5h2M4 4.5h3M10 4.5h1M13 4.5h2M0 5.5h2M5 5.5h2M10 5.5h1M13 5.5h2M0 6.5h2M5 6.5h1M13 6.5h2M0 7.5h2M3 7.5h1M5 7.5h1M8 7.5h1M13 7.5h2M0 8.5h2M3 8.5h1M8 8.5h1M11 8.5h1M13 8.5h2M0 9.5h2M3 9.5h2M7 9.5h3M11 9.5h1M13 9.5h2M0 10.5h5M6 10.5h9M0 11.5h15M0 12.5h15"/><path stroke="#fff" d="M3 1.5h1M8 1.5h1M15 1.5h1M3 2.5h1M8 2.5h1M12 2.5h1M15 2.5h1M2 3.5h2M7 3.5h2M12 3.5h1M15 3.5h1M2 4.5h2M7 4.5h3M11 4.5h2M15 4.5h1M2 5.5h3M7 5.5h3M11 5.5h2M15 5.5h1M2 6.5h3M6 6.5h7M15 6.5h1M2 7.5h1M4 7.5h1M6 7.5h2M9 7.5h4M15 7.5h1M2 8.5h1M4 8.5h4M9 8.5h2M12 8.5h1M15 8.5h1M2 9.5h1M5 9.5h2M10 9.5h1M12 9.5h1M15 9.5h1M5 10.5h1M15 10.5h1M15 11.5h1M15 12.5h1M1 13.5h15"/></svg>
<svg style="left:207px;top:90px;" width="19" height="18" viewBox="0 0 19 18" shape-rendering="crispEdges"><rect x="0.500" y="0.500" width="18" height="17" fill="none" stroke="#fff" stroke-dasharray="1 1"/></svg>
<svg style="left:209px;top:92px;" width="15" height="13" viewBox="0 0 15 13" shape-rendering="crispEdges"><path stroke="#808080" d="M0 0.5h15M0 1.5h2M3 1.5h4M8 1.5h4M13 1.5h2M0 2.5h2M3 2.5h4M8 2.5h4M13 2.5h2M0 3.5h2M3 3.5h4M8 3.5h4M13 3.5h2M0 4.5h2M3 4.5h4M8 4.5h4M13 4.5h2M0 5.5h2M3 5.5h4M8 5.5h4M13 5.5h2M0 6.5h2M3 6.5h4M8 6.5h4M13 6.5h2M0 7.5h2M3 7.5h1M5 7.5h2M8 7.5h1M10 7.5h2M13 7.5h2M0 8.5h2M4 8.5h3M9 8.5h3M14 8.5h1M0 9.5h2M3 9.5h4M8 9.5h4M13 9.5h2M0 10.5h2M3 10.5h4M8 10.5h4M13 10.5h2M0 11.5h15M0 12.5h15"/><path stroke="#fff" d="M2 1.5h1M7 1.5h1M12 1.5h1M2 2.5h1M7 2.5h1M12 2.5h1M2 3.5h1M7 3.5h1M12 3.5h1M2 4.5h1M7 4.5h1M12 4.5h1M2 5.5h1M7 5.5h1M12 5.5h1M2 6.5h1M7 6.5h1M12 6.5h1M2 7.5h1M4 7.5h1M7 7.5h1M9 7.5h1M12 7.5h1M2 8.5h2M7 8.5h2M12 8.5h2M2 9.5h1M7 9.5h1M12 9.5h1M2 10.5h1M7 10.5h1M12 10.5h1"/></svg>
<div class="a" style="left:230px;top:90px;width:1px;height:18px;background:#808080;"></div><div class="a" style="left:231px;top:90px;width:1px;height:18px;background:#fff;"></div>
<svg style="left:238px;top:92px;" width="15" height="13" viewBox="0 0 15 13" shape-rendering="crispEdges"><path stroke="#000080" d="M0 0.5h15M0 1.5h1M4 1.5h1M6 1.5h1M8 1.5h3M12 1.5h1M14 1.5h1M0 2.5h1M2 2.5h1M4 2.5h1M6 2.5h1M8 2.5h2M11 2.5h2M14 2.5h1M0 3.5h1M4 3.5h1M6 3.5h1M8 3.5h3M13 3.5h2M0 4.5h15M0 5.5h1M2 5.5h1M6 5.5h1M8 5.5h2M13 5.5h2M0 6.5h1M2 6.5h1M4 6.5h1M6 6.5h1M8 6.5h2M11 6.5h1M13 6.5h2M0 7.5h1M2 7.5h1M6 7.5h1M8 7.5h2M13 7.5h2M0 8.5h15M0 9.5h1M4 9.5h1M6 9.5h1M8 9.5h2M14 9.5h1M0 10.5h1M2 10.5h1M4 10.5h1M6 10.5h1M8 10.5h2M11 10.5h2M14 10.5h1M0 11.5h1M4 11.5h1M6 11.5h1M8 11.5h2M14 11.5h1M0 12.5h15"/><path stroke="#fff" d="M1 1.5h3M5 1.5h1M7 1.5h1M11 1.5h1M13 1.5h1M1 2.5h1M3 2.5h1M5 2.5h1M7 2.5h1M10 2.5h1M13 2.5h1M1 3.5h3M5 3.5h1M7 3.5h1M11 3.5h2M1 5.5h1M3 5.5h3M7 5.5h1M10 5.5h3M1 6.5h1M3 6.5h1M5 6.5h1M7 6.5h1M10 6.5h1M12 6.5h1M1 7.5h1M3 7.5h3M7 7.5h1M10 7.5h3M1 9.5h3M5 9.5h1M7 9.5h1M10 9.5h4M1 10.5h1M3 10.5h1M5 10.5h1M7 10.5h1M10 10.5h1M13 10.5h1M1 11.5h3M5 11.5h1M7 11.5h1M10 11.5h4"/></svg>
<div class="a" style="left:259px;top:90px;width:1px;height:18px;background:#808080;"></div><div class="a" style="left:260px;top:90px;width:1px;height:18px;background:#fff;"></div>
<div class="prs" style="left:263px;top:88px;width:23px;height:22px;"></div>
<svg style="left:268px;top:92px;" width="15" height="5" viewBox="0 0 15 5" shape-rendering="crispEdges"><rect x="0" y="0" width="3" height="5" fill="#000080"/><rect x="4" y="0" width="3" height="5" fill="#808080"/><rect x="8" y="0" width="3" height="5" fill="#808080"/><rect x="12" y="0" width="3" height="5" fill="#808080"/></svg>
<div class="t" style="left:268px;top:98px;font-family:'Liberation Serif',serif;font-size:10.5px;line-height:10px;color:#000080;letter-spacing:0.3px;text-shadow:0.3px 0 0 #000080">8</div>
<svg style="left:290px;top:92px;" width="15" height="5" viewBox="0 0 15 5" shape-rendering="crispEdges"><rect x="0" y="0" width="3" height="5" fill="#000080"/><rect x="4" y="0" width="3" height="5" fill="#000080"/><rect x="8" y="0" width="3" height="5" fill="#808080"/><rect x="12" y="0" width="3" height="5" fill="#808080"/></svg>
<div class="t" style="left:290px;top:97px;font-family:'Liberation Serif',serif;font-size:10.5px;line-height:10px;color:#000080;letter-spacing:0.3px;text-shadow:0.3px 0 0 #000080">16</div>
<svg style="left:313px;top:92px;" width="15" height="5" viewBox="0 0 15 5" shape-rendering="crispEdges"><rect x="0" y="0" width="3" height="5" fill="#000080"/><rect x="4" y="0" width="3" height="5" fill="#000080"/><rect x="8" y="0" width="3" height="5" fill="#000080"/><rect x="12" y="0" width="3" height="5" fill="#000080"/></svg>
<div class="t" style="left:313px;top:97px;font-family:'Liberation Serif',serif;font-size:10.5px;line-height:10px;color:#000080;letter-spacing:0.3px;text-shadow:0.3px 0 0 #000080">32</div>
<svg style="left:336px;top:92px;" width="15" height="5" viewBox="0 0 15 5" shape-rendering="crispEdges"><rect x="0" y="0" width="3" height="5" fill="#000080"/><rect x="4" y="0" width="3" height="5" fill="#000080"/><rect x="8" y="0" width="3" height="5" fill="#000080"/><rect x="12" y="0" width="3" height="5" fill="#000080"/></svg>
<div class="t" style="left:337px;top:97px;font-family:'Liberation Serif',serif;font-size:10.5px;line-height:10px;color:#000080;letter-spacing:0.3px;text-shadow:0.3px 0 0 #000080">Fl.</div>
<div class="a" style="left:357px;top:90px;width:1px;height:18px;background:#808080;"></div><div class="a" style="left:358px;top:90px;width:1px;height:18px;background:#fff;"></div>
<div class="a" style="left:364px;top:91px;width:18px;height:3px;overflow:hidden"><div class="t" style="left:0;top:-5px;font-weight:bold;font-size:9.5px;line-height:9.5px;color:#909090;letter-spacing:0px;text-shadow:0.4px 0 0 #909090">255</div></div>
<div class="t" style="left:364px;top:94px;font-family:'Liberation Sans',sans-serif;font-weight:bold;font-size:9.5px;line-height:9.5px;color:#000080;letter-spacing:0px;text-shadow:0.4px 0 0 #000080">255</div>
<div class="a" style="left:364px;top:103px;width:18px;height:3px;overflow:hidden"><div class="t" style="left:0;top:-1px;font-weight:bold;font-size:9.5px;line-height:9.5px;color:#909090;letter-spacing:0px;text-shadow:0.4px 0 0 #909090">255</div></div>
<div class="a" style="left:410px;top:91px;width:18px;height:3px;overflow:hidden"><div class="t" style="left:0;top:-5px;font-weight:bold;font-size:9.5px;line-height:9.5px;color:#909090;letter-spacing:0px;text-shadow:0.4px 0 0 #909090">111</div></div>
<div class="t" style="left:410px;top:94px;font-family:'Liberation Sans',sans-serif;font-weight:bold;font-size:9.5px;line-height:9.5px;color:#000080;letter-spacing:0px;text-shadow:0.4px 0 0 #000080">111</div>
<div class="a" style="left:410px;top:103px;width:18px;height:3px;overflow:hidden"><div class="t" style="left:0;top:-1px;font-weight:bold;font-size:9.5px;line-height:9.5px;color:#909090;letter-spacing:0px;text-shadow:0.4px 0 0 #909090">111</div></div>
<div class="prs" style="left:384px;top:88px;width:23px;height:22px;"></div>
<div class="a" style="left:391px;top:92px;width:18px;height:3px;overflow:hidden"><div class="t" style="left:0;top:-4px;font-weight:bold;font-size:8.5px;line-height:8.5px;color:#909090;letter-spacing:0.5px;text-shadow:0.4px 0 0 #909090">FF</div></div>
<div class="t" style="left:391px;top:95px;font-family:'Liberation Sans',sans-serif;font-weight:bold;font-size:8.5px;line-height:8.5px;color:#000080;letter-spacing:0.5px;text-shadow:0.4px 0 0 #000080">FF</div>
<div class="a" style="left:391px;top:104px;width:18px;height:3px;overflow:hidden"><div class="t" style="left:0;top:-1px;font-weight:bold;font-size:8.5px;line-height:8.5px;color:#909090;letter-spacing:0.5px;text-shadow:0.4px 0 0 #909090">FF</div></div>
<div class="a" style="left:432px;top:90px;width:1px;height:18px;background:#808080;"></div><div class="a" style="left:433px;top:90px;width:1px;height:18px;background:#fff;"></div>
<div class="t" style="left:440px;top:94px;font-size:7.5px;line-height:7px;color:#fff;letter-spacing:0px">LO HI</div>
<div class="t" style="left:440px;top:100px;font-size:7.5px;line-height:7px;color:#fff;letter-spacing:0px">HI LO</div>
<div class="t" style="left:439px;top:93px;font-size:7.5px;line-height:7px;color:#707070;letter-spacing:0px">LO HI</div>
<div class="t" style="left:439px;top:99px;font-size:7.5px;line-height:7px;color:#707070;letter-spacing:0px">HI LO</div>
<svg style="left:463px;top:95px;" width="15" height="8" viewBox="0 0 15 8"><path d="M0 3.500h7M3.500 0v7M10 5h5" stroke="#000080" stroke-width="2" fill="none"/><path d="M5 8l5-8" stroke="#000080" stroke-width="1.400" fill="none"/></svg>
<div class="a" style="left:484px;top:90px;width:1px;height:18px;background:#808080;"></div><div class="a" style="left:485px;top:90px;width:1px;height:18px;background:#fff;"></div>
<svg style="left:492px;top:92px;" width="14" height="13" viewBox="0 0 14 13"><circle cx="3" cy="3" r="2.200" fill="none" stroke="#000080" stroke-width="1.800"/><circle cx="11" cy="10" r="2.200" fill="none" stroke="#000080" stroke-width="1.800"/><path d="M0.500 12.500l13-12" stroke="#000080" stroke-width="1.500"/></svg>
<svg style="left:516px;top:91px;" width="13" height="14" viewBox="0 0 13 14"><path d="M6.500 0l6.500 14h-13zM6 5.500l-3 6.500h6.500z" fill="#000080" fill-rule="evenodd"/></svg>
<div class="t" style="left:539px;top:92px;font-family:'Liberation Serif',serif;font-weight:bold;font-size:15px;line-height:15px;color:#000080;letter-spacing:-1px"><span style="font-family:'Liberation Sans',sans-serif;font-size:12px;position:relative;top:1px;letter-spacing:-1.500px">×</span>1</div>
<div class="t" style="left:560px;top:94px;font-family:'Liberation Sans',sans-serif;font-weight:bold;font-size:10px;line-height:10px;color:#000080;letter-spacing:-0.5px;text-shadow:0.4px 0 0 #000080">Org</div>
<div class="t" style="left:584px;top:91px;font-family:'Liberation Sans',sans-serif;font-weight:bold;font-size:9px;line-height:9px;color:#fff;letter-spacing:-0.2px;text-shadow:0.4px 0 0 #fff">Org</div>
<div class="t" style="left:584px;top:98px;font-family:'Liberation Sans',sans-serif;font-weight:bold;font-size:9px;line-height:9px;color:#fff;letter-spacing:-0.2px;text-shadow:0.4px 0 0 #fff">Org</div>
<div class="t" style="left:583px;top:90px;font-family:'Liberation Sans',sans-serif;font-weight:bold;font-size:9px;line-height:9px;color:#909090;letter-spacing:-0.2px;text-shadow:0.4px 0 0 #909090">Org</div>
<div class="t" style="left:583px;top:97px;font-family:'Liberation Sans',sans-serif;font-weight:bold;font-size:9px;line-height:9px;color:#909090;letter-spacing:-0.2px;text-shadow:0.4px 0 0 #909090">Org</div>
<!-- TOOLBAR 4 -->
<svg style="left:33px;top:114px;" width="17" height="15" viewBox="0 0 17 15" shape-rendering="crispEdges"><path stroke="#ffff99" d="M9 0.5h1M11 0.5h1M13 0.5h1M8 1.5h1M10 1.5h1M12 1.5h1M14 1.5h1M10 2.5h1M12 2.5h1M14 2.5h1M16 2.5h1M8 3.5h1M10 3.5h1M12 3.5h1M14 3.5h1M16 3.5h1M9 4.5h1M12 4.5h1M14 4.5h1M16 4.5h1M10 5.5h1M12 5.5h1M15 5.5h1M11 6.5h1M13 6.5h1"/><path stroke="#000" d="M13 1.5h1M9 2.5h1M5 3.5h2M5 4.5h3M11 4.5h1M6 5.5h3M14 5.5h1M7 6.5h3M8 7.5h3M9 8.5h3M10 9.5h3M11 10.5h3M12 11.5h3M13 12.5h3M14 13.5h3M15 14.5h2"/><path stroke="#000080" d="M1 7.5h7M1 8.5h1M3 8.5h1M5 8.5h1M7 8.5h2M1 9.5h2M4 9.5h1M6 9.5h3M1 10.5h1M3 10.5h1M5 10.5h1M7 10.5h2M1 11.5h2M4 11.5h1M6 11.5h3M1 12.5h8M1 13.5h8M1 14.5h8"/><path stroke="#a6caf0" d="M2 8.5h1M4 8.5h1M6 8.5h1M3 9.5h1M5 9.5h1M2 10.5h1M4 10.5h1M6 10.5h1M3 11.5h1M5 11.5h1"/></svg>
<svg style="left:56px;top:114px;" width="17" height="15" viewBox="0 0 17 15" shape-rendering="crispEdges"><path stroke="#ffff99" d="M9 0.5h1M11 0.5h1M13 0.5h1M8 1.5h1M10 1.5h1M12 1.5h1M14 1.5h1M10 2.5h1M12 2.5h1M14 2.5h1M16 2.5h1M8 3.5h1M10 3.5h1M12 3.5h1M14 3.5h1M16 3.5h1M9 4.5h1M12 4.5h1M14 4.5h1M16 4.5h1M10 5.5h1M12 5.5h1M15 5.5h1M11 6.5h1M13 6.5h1"/><path stroke="#000" d="M13 1.5h1M9 2.5h1M5 3.5h2M5 4.5h3M11 4.5h1M6 5.5h3M14 5.5h1M7 6.5h3M8 7.5h3M9 8.5h3M10 9.5h3M2 10.5h1M8 10.5h1M11 10.5h3M1 11.5h1M3 11.5h5M9 11.5h1M12 11.5h3M0 12.5h1M10 12.5h1M13 12.5h3M1 13.5h1M3 13.5h5M9 13.5h1M14 13.5h3M2 14.5h1M8 14.5h1M15 14.5h2"/><path stroke="#000080" d="M1 7.5h7M1 8.5h1M3 8.5h1M5 8.5h1M7 8.5h2M1 9.5h2M4 9.5h1M6 9.5h3M4 10.5h1M6 10.5h1"/><path stroke="#a6caf0" d="M2 8.5h1M4 8.5h1M6 8.5h1M3 9.5h1M5 9.5h1M5 10.5h1"/><path stroke="#fff" d="M2 11.5h1M8 11.5h1M1 12.5h9M2 13.5h1M8 13.5h1"/></svg>
<svg style="left:10px;top:115px;" width="16" height="16" viewBox="0 0 16 16" shape-rendering="crispEdges"><path stroke="#808080" d="M9 0.5h1M14 0.5h1M8 1.5h3M13 1.5h1M5 2.5h1M9 2.5h1M13 2.5h2M4 3.5h1M6 3.5h1M10 3.5h1M5 4.5h1M7 4.5h1M9 4.5h1M11 4.5h1M0 5.5h3M6 5.5h1M8 5.5h1M10 5.5h1M14 5.5h1M0 6.5h3M7 6.5h1M9 6.5h1M11 6.5h1M13 6.5h3M0 7.5h3M5 7.5h1M8 7.5h1M10 7.5h1M12 7.5h1M14 7.5h1M0 8.5h3M4 8.5h3M9 8.5h1M11 8.5h1M13 8.5h1M0 9.5h3M5 9.5h1M7 9.5h4M12 9.5h1M14 9.5h1M0 10.5h3M4 10.5h3M8 10.5h3M13 10.5h1M15 10.5h1M0 11.5h3M4 11.5h3M8 11.5h3M14 11.5h2M0 12.5h3M4 12.5h3M8 12.5h3M0 13.5h3M4 13.5h3M8 13.5h3M0 14.5h3M4 14.5h3M8 14.5h3"/><path stroke="#fff" d="M11 2.5h1M8 3.5h1M12 3.5h1M12 4.5h1M12 5.5h1M3 6.5h1M3 7.5h1M13 7.5h1M3 8.5h1M3 9.5h1M15 9.5h1M3 10.5h1M7 10.5h1M11 10.5h1M3 11.5h1M7 11.5h1M11 11.5h1M3 12.5h1M7 12.5h1M11 12.5h1M15 12.5h1M3 13.5h1M7 13.5h1M11 13.5h1M3 14.5h1M7 14.5h1M11 14.5h1M1 15.5h3M5 15.5h3M9 15.5h3"/></svg>
<div class="a" style="left:78px;top:114px;width:1px;height:18px;background:#808080;"></div><div class="a" style="left:79px;top:114px;width:1px;height:18px;background:#fff;"></div>
<svg style="left:85px;top:115px;" width="16" height="15" viewBox="0 0 16 15" shape-rendering="crispEdges"><path stroke="#808080" d="M0 0.5h9M0 1.5h9M0 2.5h9M0 3.5h12M0 4.5h12M0 5.5h12M0 6.5h12M3 7.5h12M3 8.5h9M14 8.5h1M3 9.5h5M9 9.5h4M14 9.5h1M7 10.5h1M9 10.5h3M14 10.5h1M7 11.5h1M9 11.5h1M14 11.5h1M7 12.5h1M14 12.5h1M7 13.5h8"/><path stroke="#fff" d="M12 6.5h4M1 7.5h2M15 7.5h1M12 8.5h2M15 8.5h1M8 9.5h1M13 9.5h1M15 9.5h1M4 10.5h3M8 10.5h1M12 10.5h2M15 10.5h1M8 11.5h1M10 11.5h4M15 11.5h1M8 12.5h6M15 12.5h1M15 13.5h1M7 14.5h9"/></svg>
<div class="a" style="left:107px;top:114px;width:1px;height:18px;background:#808080;"></div><div class="a" style="left:108px;top:114px;width:1px;height:18px;background:#fff;"></div>
<svg style="left:114px;top:116px;" width="4" height="14" viewBox="0 0 4 14" shape-rendering="crispEdges"><path stroke="#000080" d="M0 0.5h4M0 2.5h4M0 4.5h4M0 6.5h4M0 8.5h4M0 10.5h4M0 12.5h4"/></svg>
<svg style="left:119px;top:116px;" width="12" height="12" viewBox="0 0 12 12" shape-rendering="crispEdges"><path stroke="#000" d="M2 0.5h1M3 1.5h2M0 2.5h6M7 2.5h5M0 3.5h6M7 3.5h1M11 3.5h1M3 4.5h2M7 4.5h1M11 4.5h1M2 5.5h1M7 5.5h1M11 5.5h1M3 6.5h1M7 6.5h1M11 6.5h1M1 7.5h2M7 7.5h1M11 7.5h1M0 8.5h6M7 8.5h1M11 8.5h1M0 9.5h6M7 9.5h5M1 10.5h2M3 11.5h1"/><path stroke="#000080" d="M8 3.5h3"/><path stroke="#fff" d="M8 4.5h3M8 5.5h3M8 6.5h3M8 7.5h3M8 8.5h3"/></svg>
<svg style="left:138px;top:116px;" width="15" height="14" viewBox="0 0 15 14" shape-rendering="crispEdges"><rect x="0.500" y="0.500" width="14" height="13" fill="#0000ff" stroke="#800080"/><rect x="1" y="1" width="13" height="1" fill="#800080"/><rect x="1" y="4" width="13" height="1" fill="#800080"/><rect x="1" y="12" width="13" height="1" fill="#800080"/></svg>
<div class="prs" style="left:157px;top:112px;width:23px;height:22px;"></div>
<svg style="left:161px;top:117px;" width="4" height="14" viewBox="0 0 4 14" shape-rendering="crispEdges"><path stroke="#000080" d="M0 0.5h4M0 2.5h4M0 4.5h4M0 6.5h4M0 8.5h4M0 10.5h4M0 12.5h4"/></svg>
<svg style="left:166px;top:120px;" width="11" height="6" viewBox="0 0 11 6" shape-rendering="crispEdges"><path stroke="#000" d="M3 0.5h1M6 0.5h1M8 0.5h1M10 0.5h1M4 1.5h1M6 1.5h1M8 1.5h1M10 1.5h1M0 2.5h7M8 2.5h1M10 2.5h1M0 3.5h7M8 3.5h1M10 3.5h1M4 4.5h1M6 4.5h1M8 4.5h1M10 4.5h1M3 5.5h1M6 5.5h1M8 5.5h1M10 5.5h1"/></svg>
<div class="a" style="left:182px;top:114px;width:1px;height:18px;background:#808080;"></div><div class="a" style="left:183px;top:114px;width:1px;height:18px;background:#fff;"></div>
<div class="sb" style="left:254px;top:114px;width:16px;height:8px;"><svg style="left:0px;top:0px;left:0;top:0" width="14" height="6" viewBox="0 0 14 6" shape-rendering="crispEdges"><path d="M7 2h1v1h1v1h-3v-1h1z" fill="#808080"/><path d="M8 4h2v1h-2z" fill="#fff"/></svg></div><div class="sb" style="left:254px;top:123px;width:16px;height:8px;"><svg style="left:0px;top:0px;left:0;top:0" width="14" height="6" viewBox="0 0 14 6" shape-rendering="crispEdges"><path d="M6 2h3v1h-1v1h-1v-1h-1z" fill="#808080"/><path d="M8 3h1v1h-1v1h-1v-1h1z" fill="#fff"/></svg></div>
<div class="sb" style="left:270px;top:114px;width:16px;height:8px;"><svg style="left:0px;top:0px;left:0;top:0" width="14" height="6" viewBox="0 0 14 6" shape-rendering="crispEdges"><path d="M7 2h1v1h1v1h-3v-1h1z" fill="#808080"/><path d="M8 4h2v1h-2z" fill="#fff"/></svg></div><div class="sb" style="left:270px;top:123px;width:16px;height:8px;"><svg style="left:0px;top:0px;left:0;top:0" width="14" height="6" viewBox="0 0 14 6" shape-rendering="crispEdges"><path d="M6 2h3v1h-1v1h-1v-1h-1z" fill="#808080"/><path d="M8 3h1v1h-1v1h-1v-1h1z" fill="#fff"/></svg></div>
<div class="sb" style="left:360px;top:114px;width:16px;height:8px;"><svg style="left:0px;top:0px;left:0;top:0" width="14" height="6" viewBox="0 0 14 6" shape-rendering="crispEdges"><path d="M7 2h1v1h1v1h-3v-1h1z" fill="#808080"/><path d="M8 4h2v1h-2z" fill="#fff"/></svg></div><div class="sb" style="left:360px;top:123px;width:16px;height:8px;"><svg style="left:0px;top:0px;left:0;top:0" width="14" height="6" viewBox="0 0 14 6" shape-rendering="crispEdges"><path d="M6 2h3v1h-1v1h-1v-1h-1z" fill="#808080"/><path d="M8 3h1v1h-1v1h-1v-1h1z" fill="#fff"/></svg></div>
<div class="sb" style="left:445px;top:114px;width:16px;height:8px;"><svg style="left:0px;top:0px;left:0;top:0" width="14" height="6" viewBox="0 0 14 6" shape-rendering="crispEdges"><path d="M7 2h1v1h1v1h-3v-1h1z" fill="#808080"/><path d="M8 4h2v1h-2z" fill="#fff"/></svg></div><div class="sb" style="left:445px;top:123px;width:16px;height:8px;"><svg style="left:0px;top:0px;left:0;top:0" width="14" height="6" viewBox="0 0 14 6" shape-rendering="crispEdges"><path d="M6 2h3v1h-1v1h-1v-1h-1z" fill="#808080"/><path d="M8 3h1v1h-1v1h-1v-1h1z" fill="#fff"/></svg></div>
<!-- LEFT PANEL -->
<div class="btn" style="left:3px;top:139px;width:24px;height:23px;"></div>
<svg style="left:10px;top:144px;" width="11" height="13" viewBox="0 0 11 13" shape-rendering="crispEdges"><path stroke="#000" d="M0 0.5h11M0 1.5h1M10 1.5h1M0 2.5h1M10 2.5h1M0 3.5h1M10 3.5h1M0 4.5h1M10 4.5h1M0 5.5h1M10 5.5h1M0 6.5h1M10 6.5h1M0 7.5h1M10 7.5h1M0 8.5h1M10 8.5h1M0 9.5h1M7 9.5h4M0 10.5h1M7 10.5h1M9 10.5h1M0 11.5h1M7 11.5h2M0 12.5h8"/><path stroke="#fff" d="M1 1.5h9M1 2.5h9M1 3.5h9M1 4.5h9M1 5.5h9M1 6.5h9M1 7.5h9M1 8.5h9M1 9.5h6M1 10.5h6M8 10.5h1M1 11.5h6"/></svg>
<div class="btn" style="left:3px;top:162px;width:24px;height:23px;"></div>
<svg style="left:8px;top:166px;" width="15" height="13" viewBox="0 0 15 13" shape-rendering="crispEdges"><path stroke="#808000" d="M0 0.5h1M0 1.5h1M0 2.5h1M12 2.5h1M0 3.5h1M12 3.5h1M0 4.5h1M12 4.5h1M0 5.5h1M12 5.5h1M0 6.5h1M12 6.5h1M0 7.5h13M0 8.5h2M11 8.5h2M0 9.5h2M11 9.5h2M0 10.5h2M11 10.5h2M0 11.5h2M11 11.5h2"/><path stroke="#000" d="M1 0.5h13M1 1.5h1M11 1.5h1M13 1.5h1M1 2.5h1M11 2.5h1M13 2.5h1M1 3.5h1M11 3.5h1M13 3.5h1M1 4.5h1M11 4.5h1M13 4.5h1M1 5.5h1M11 5.5h1M13 5.5h1M1 6.5h11M13 6.5h1M13 7.5h1M2 8.5h9M13 8.5h1M2 9.5h6M10 9.5h1M13 9.5h1M2 10.5h6M10 10.5h1M13 10.5h1M2 11.5h6M10 11.5h1M13 11.5h1M1 12.5h13"/><path stroke="#c0c0c0" d="M2 1.5h9M2 2.5h9M2 3.5h9M2 4.5h9M2 5.5h9M8 9.5h2M8 10.5h2M8 11.5h2"/><path stroke="#fff" d="M12 1.5h1"/></svg>
<div class="btn" style="left:33px;top:139px;width:48px;height:46px;"></div>
<svg style="left:41px;top:147px;" width="32" height="30" viewBox="0 0 32 30"><path d="M17 4c2-3 7-3 9 0l2 2" fill="none" stroke="#000" stroke-width="2"/><path d="M24 9h6v-6z" fill="#000"/><path d="M1 28V11l2-2h6l2 2h9l2 2v5H9z" fill="#ffff99" stroke="#000" stroke-width="2" stroke-linejoin="miter"/><path d="M1 28l8-10h21l-8 10z" fill="#808000" stroke="#000" stroke-width="2" stroke-linejoin="miter"/></svg>
<div class="btn" style="left:81px;top:139px;width:17px;height:46px;"></div>
<svg style="left:85px;top:160px;" width="11" height="6" viewBox="0 0 11 6"><path d="M0 0h11l-5.500 6z" fill="#000"/></svg>
<div class="btn" style="left:108px;top:139px;width:48px;height:46px;"></div>
<svg style="left:116px;top:147px;" width="32" height="30" viewBox="0 0 32 30"><path d="M16.500 4c1-3.500 7-3.500 9.500 0.500" fill="none" stroke="#606060" stroke-width="2"/><path d="M24 8.500h6.500v-6.500z" fill="#606060"/><path d="M1.500 27V11.500l1.500-1.500h4v10z" fill="#f0e898" stroke="#606060" stroke-width="1.500"/><rect x="6" y="5" width="18" height="14" fill="#e86060"/><rect x="8" y="10" width="14" height="9" fill="#fbecec"/><rect x="8" y="7" width="2" height="2" fill="#fff"/><path d="M10 13h4v1h2v-1h4v1h-1v1h-1v3h-1v-3h-1v-1h-2v1h-1v3h-1v-3h-1v-1h-1z" fill="#e04040"/><path d="M1.500 27.500l8.500-9.500h20l-8.500 9.500z" fill="#a0a050" stroke="#606060" stroke-width="1.500" stroke-linejoin="miter"/></svg>
<div class="btn" style="left:163px;top:139px;width:23px;height:23px;"></div>
<div class="btn" style="left:186px;top:139px;width:24px;height:23px;"></div>
<div class="btn" style="left:210px;top:139px;width:24px;height:23px;"></div>
<div class="btn" style="left:163px;top:162px;width:23px;height:23px;"></div>
<div class="btn" style="left:186px;top:162px;width:24px;height:23px;"></div>
<svg style="left:167px;top:148px;" width="5" height="6" viewBox="0 0 5 6" shape-rendering="crispEdges"><path stroke="#ff0000" d="M2 0.5h1M3 1.5h1M4 2.5h1"/><path stroke="#800000" d="M2 1.5h1M0 2.5h4M0 3.5h5M2 4.5h2M2 5.5h1"/></svg>
<svg style="left:172px;top:145px;" width="11" height="13" viewBox="0 0 11 13" shape-rendering="crispEdges"><path stroke="#000" d="M0 0.5h11M0 1.5h1M10 1.5h1M0 2.5h1M10 2.5h1M0 3.5h1M10 3.5h1M0 4.5h1M10 4.5h1M0 5.5h1M10 5.5h1M0 6.5h1M10 6.5h1M0 7.5h1M10 7.5h1M0 8.5h1M10 8.5h1M0 9.5h1M7 9.5h4M0 10.5h1M7 10.5h1M9 10.5h1M0 11.5h1M7 11.5h2M0 12.5h8"/><path stroke="#fff" d="M1 1.5h9M1 2.5h9M1 3.5h9M1 4.5h9M1 5.5h9M1 6.5h9M1 7.5h9M1 8.5h9M1 9.5h6M1 10.5h6M8 10.5h1M1 11.5h6"/></svg>
<svg style="left:190px;top:148px;" width="5" height="6" viewBox="0 0 5 6" shape-rendering="crispEdges"><path stroke="#ff0000" d="M2 0.5h1M3 1.5h1M4 2.5h1"/><path stroke="#800000" d="M2 1.5h1M0 2.5h4M0 3.5h5M2 4.5h2M2 5.5h1"/></svg>
<svg style="left:195px;top:142px;" width="12" height="13" viewBox="0 0 12 13" shape-rendering="crispEdges"><path stroke="#ffff00" d="M8 0.5h1M10 0.5h1M6 1.5h1M9 1.5h1M7 2.5h1M10 2.5h1M6 3.5h1M8 3.5h1M8 4.5h1M10 4.5h1"/><path stroke="#000" d="M1 2.5h1M0 3.5h3M1 4.5h3M2 5.5h3M3 6.5h3M4 7.5h3M5 8.5h3M6 9.5h3M7 10.5h3M8 11.5h3M9 12.5h2"/><path stroke="#000080" d="M1 7.5h1M1 8.5h4M1 9.5h1M4 9.5h1M1 10.5h4"/><path stroke="#fff" d="M2 9.5h2"/></svg>
<svg style="left:214px;top:143px;" width="15" height="13" viewBox="0 0 15 13" shape-rendering="crispEdges"><path stroke="#000" d="M5 0.5h2M8 0.5h2M4 1.5h1M6 1.5h3M10 1.5h1M3 2.5h1M6 2.5h1M8 2.5h1M11 2.5h1M2 3.5h1M5 3.5h2M8 3.5h2M12 3.5h1M4 4.5h2M9 4.5h2M5 5.5h1M9 5.5h1"/><path stroke="#808080" d="M7 2.5h1M7 3.5h1M6 4.5h3M6 5.5h3"/><path stroke="#000080" d="M1 4.5h3M11 4.5h3M0 5.5h1M4 5.5h1M10 5.5h1M14 5.5h1M0 6.5h1M14 6.5h1M0 7.5h1M14 7.5h1M1 8.5h3M8 8.5h1M13 8.5h1M7 9.5h2M12 9.5h1"/><path stroke="#0000ff" d="M1 5.5h1M3 5.5h1M11 5.5h1M13 5.5h1M1 6.5h3M12 6.5h2M1 7.5h3M12 7.5h2"/><path stroke="#00ffff" d="M2 5.5h1M12 5.5h1"/><path stroke="#008000" d="M4 6.5h8M4 7.5h2M7 7.5h3M11 7.5h1M4 8.5h4M9 8.5h4M3 9.5h2M6 9.5h1M9 9.5h1M11 9.5h1M3 10.5h5M9 10.5h4M3 11.5h2M9 11.5h2M2 12.5h5M8 12.5h5"/><path stroke="#00ff00" d="M6 7.5h1M10 7.5h1M5 9.5h1M10 9.5h1M5 11.5h1M11 11.5h1"/></svg>
<svg style="left:167px;top:167px;" width="11" height="13" viewBox="0 0 11 13" shape-rendering="crispEdges"><path stroke="#000" d="M0 0.5h11M0 1.5h1M10 1.5h1M0 2.5h1M10 2.5h1M0 3.5h1M10 3.5h1M0 4.5h1M10 4.5h1M0 5.5h1M10 5.5h1M0 6.5h1M10 6.5h1M0 7.5h1M10 7.5h1M0 8.5h1M10 8.5h1M0 9.5h1M7 9.5h4M0 10.5h1M7 10.5h1M9 10.5h1M0 11.5h1M7 11.5h2M0 12.5h8"/><path stroke="#fff" d="M1 1.5h9M1 2.5h9M1 3.5h9M1 4.5h9M1 5.5h9M1 6.5h9M1 7.5h9M1 8.5h9M1 9.5h6M1 10.5h6M8 10.5h1M1 11.5h6"/></svg>
<svg style="left:178px;top:171px;" width="5" height="6" viewBox="0 0 5 6" shape-rendering="crispEdges"><path stroke="#ff0000" d="M2 0.5h1M3 1.5h1M4 2.5h1"/><path stroke="#800000" d="M2 1.5h1M0 2.5h4M0 3.5h5M2 4.5h2M2 5.5h1"/></svg>
<svg style="left:190px;top:168px;" width="15" height="11" viewBox="0 0 15 11" shape-rendering="crispEdges"><path stroke="#000080" d="M0 0.5h1M2 0.5h1M4 0.5h1M6 0.5h1M8 0.5h1M10 0.5h1M12 0.5h1M13 1.5h1M0 2.5h1M13 3.5h1M0 4.5h1M9 4.5h4M8 5.5h1M13 5.5h1M0 6.5h1M7 6.5h1M14 6.5h1M1 7.5h1M3 7.5h1M5 7.5h1M7 7.5h1M14 7.5h1M8 8.5h1M14 8.5h1M9 9.5h1M13 9.5h1M10 10.5h3"/><path stroke="#ff0000" d="M1 0.5h1M3 0.5h1M5 0.5h1M7 0.5h1M9 0.5h1M11 0.5h1M13 0.5h1M0 1.5h1M11 1.5h1M10 2.5h1M13 2.5h1M0 3.5h1M9 3.5h1M13 4.5h1M0 5.5h1M0 7.5h1M2 7.5h1M4 7.5h1M6 7.5h1"/><path stroke="#fff" d="M1 1.5h10M12 1.5h1M1 2.5h2M8 2.5h2M11 2.5h2M1 3.5h8M10 3.5h3M1 4.5h2M8 4.5h1M1 5.5h7M1 6.5h6"/><path stroke="#000" d="M3 2.5h5M3 4.5h5"/><path stroke="#0000ff" d="M9 5.5h1M12 5.5h1M8 6.5h1M11 6.5h3M9 7.5h2M13 7.5h1M9 8.5h2M12 8.5h2M10 9.5h3"/><path stroke="#008000" d="M10 5.5h2M9 6.5h2M8 7.5h1M11 7.5h2M11 8.5h1"/></svg>
<div class="a" style="left:3px;top:190px;width:339px;height:1px;background:#808080;"></div>
<div class="a" style="left:3px;top:191px;width:339px;height:1px;background:#fff;"></div>
<div class="sunk" style="left:3px;top:199px;width:336px;height:21px;background:#fff;"></div>
<div class="t" style="left:7px;top:203px;letter-spacing:-0.31px;">Projects, Versions &amp; Maps:</div>
<div class="btn" style="left:321px;top:201px;width:16px;height:17px;"></div>
<svg style="left:325px;top:207px;" width="7" height="4" viewBox="0 0 7 4" shape-rendering="crispEdges"><path d="M0 0h7v1h-1v1h-1v1h-1v1h-1v-1h-1v-1h-1v-1h-1z" fill="#000"/></svg>
<div class="t" style="left:3px;top:229px;letter-spacing:-0.50px;">Filter:</div>
<div class="btn" style="left:39px;top:223px;width:23px;height:20px;"></div>
<svg style="left:53px;top:237px;" width="5" height="3" viewBox="0 0 5 3" shape-rendering="crispEdges"><path d="M0 0h5v1h-1v1h-1v1h-1v-1h-1v-1h-1z" fill="#000"/></svg>
<div class="btn" style="left:63px;top:223px;width:23px;height:20px;"></div>
<svg style="left:77px;top:237px;" width="5" height="3" viewBox="0 0 5 3" shape-rendering="crispEdges"><path d="M0 0h5v1h-1v1h-1v1h-1v-1h-1v-1h-1z" fill="#000"/></svg>
<div class="btn" style="left:87px;top:223px;width:23px;height:20px;"></div>
<svg style="left:101px;top:237px;" width="5" height="3" viewBox="0 0 5 3" shape-rendering="crispEdges"><path d="M0 0h5v1h-1v1h-1v1h-1v-1h-1v-1h-1z" fill="#000"/></svg>
<div class="btn" style="left:111px;top:223px;width:23px;height:20px;"></div>
<svg style="left:125px;top:237px;" width="5" height="3" viewBox="0 0 5 3" shape-rendering="crispEdges"><path d="M0 0h5v1h-1v1h-1v1h-1v-1h-1v-1h-1z" fill="#000"/></svg>
<div class="btn" style="left:135px;top:223px;width:23px;height:20px;"></div>
<svg style="left:149px;top:237px;" width="5" height="3" viewBox="0 0 5 3" shape-rendering="crispEdges"><path d="M0 0h5v1h-1v1h-1v1h-1v-1h-1v-1h-1z" fill="#000"/></svg>
<svg style="left:44px;top:229px;" width="14" height="4" viewBox="0 0 14 4" shape-rendering="crispEdges"><rect x="0" y="0" width="3" height="4" fill="#909090"/><rect x="4" y="0" width="3" height="4" fill="#909090"/><rect x="8" y="0" width="3" height="4" fill="#909090"/><rect x="12" y="0" width="3" height="4" fill="#909090"/></svg>
<svg style="left:68px;top:226px;" width="14" height="12" viewBox="0 0 14 12"><path d="M7 0l6.500 12h-13zM7 4.500l-3.300 5.800h6.600z" fill="#9a9a9a" fill-rule="evenodd"/></svg>
<svg style="left:93px;top:227px;" width="11" height="10" viewBox="0 0 11 10" shape-rendering="crispEdges"><path stroke="#a0a0a0" d="M0 0.5h2M4 0.5h7M0 1.5h2M4 1.5h7M0 3.5h2M0 4.5h2M0 5.5h2M0 6.5h2M0 7.5h2M0 8.5h2M0 9.5h2"/></svg>
<svg style="left:120px;top:228px;" width="7" height="9" viewBox="0 0 7 9" shape-rendering="crispEdges"><path stroke="#a0a0a0" d="M0 0.5h1M0 1.5h1M0 2.5h1M0 3.5h1M0 4.5h1M0 5.5h1M0 6.5h1M0 7.5h1M0 8.5h1"/><path stroke="#686868" d="M2 0.5h2M1 1.5h5M1 2.5h6M1 3.5h6M1 4.5h6M3 5.5h4"/></svg>
<div class="t" style="left:139px;top:224px;font-size:14px;line-height:16px;color:#b0b0b0;transform:scaleX(0.803);transform-origin:0 0;text-shadow:0.5px 0 0 #b0b0b0;">KK</div>
<div class="btn" style="left:159px;top:223px;width:28px;height:20px;"></div>
<div class="t" style="left:167px;top:227px;letter-spacing:-0.32px;">Off</div>
<div class="btn" style="left:323px;top:223px;width:18px;height:20px;"></div>
<svg style="left:326px;top:230px;" width="11" height="6" viewBox="0 0 11 6"><path d="M0 0h11l-5.500 6z" fill="#000"/></svg>
<div class="sunk" style="left:2px;top:245px;width:333px;height:456px;background:#000;"></div>
<div class="btn" style="left:4px;top:247px;width:11px;height:16px;"></div>
<div class="btn" style="left:15px;top:247px;width:84px;height:16px;"></div>
<div class="btn" style="left:99px;top:247px;width:152px;height:16px;"></div>
<div class="btn" style="left:251px;top:247px;width:81px;height:16px;"></div>
<div class="a" style="left:332px;top:247px;width:1px;height:16px;background:#d4d0c8;"></div>
<svg style="left:23px;top:252px;" width="8" height="7" viewBox="0 0 8 7"><path d="M4 0.500l-3.500 6" stroke="#808080" fill="none"/><path d="M4 0.500l3.500 6h-7" stroke="#fff" fill="none"/></svg>
<div class="t" style="left:44px;top:250px;letter-spacing:-0.34px;">Address</div>
<div class="t" style="left:106px;top:250px;letter-spacing:-0.44px;">Name</div>
<div class="t" style="left:258px;top:250px;letter-spacing:-0.35px;">Size</div>
<div class="t" style="left:5px;top:265px;font-weight:bold;color:#dedede;letter-spacing:0.41px;">10437.ols (Original)</div>
<div class="t" style="left:17px;top:278px;font-weight:bold;color:#dedede;letter-spacing:0.13px;">Hexdump</div>
<div class="t" style="left:17px;top:291px;font-weight:bold;color:#dedede;letter-spacing:0.68px;">00000</div>
<div class="t" style="left:100px;top:291px;font-weight:bold;color:#dedede;letter-spacing:0.13px;">Hexdump</div>
<div class="t" style="left:17px;top:304px;font-weight:bold;color:#dedede;letter-spacing:0.13px;">My maps</div>
<div class="t" style="left:17px;top:317px;font-weight:bold;color:#dedede;letter-spacing:0.43px;">Potential maps (140)</div>
<svg style="left:4px;top:277px;" width="12" height="12" viewBox="0 0 12 12" shape-rendering="crispEdges"><path stroke="#d8b860" d="M1 0.5h6M0 1.5h1M7 1.5h1M0 2.5h1M8 2.5h4M0 3.5h1M11 3.5h1M0 4.5h12M0 5.5h1M11 5.5h1M0 6.5h1M11 6.5h1M0 7.5h1M10 7.5h1M0 8.5h1M10 8.5h1M0 9.5h1M9 9.5h1M0 10.5h1M9 10.5h1M0 11.5h10"/><path stroke="#ffeea0" d="M1 1.5h6M1 2.5h7M1 3.5h10M2 5.5h1M4 5.5h1M6 5.5h1M8 5.5h1M10 5.5h1M1 6.5h1M3 6.5h1M5 6.5h1M7 6.5h1M9 6.5h1M2 7.5h1M4 7.5h1M6 7.5h1M8 7.5h1M1 8.5h1M3 8.5h1M5 8.5h1M7 8.5h1M9 8.5h1M2 9.5h1M4 9.5h1M6 9.5h1M8 9.5h1M1 10.5h1M3 10.5h1M5 10.5h1M7 10.5h1"/><path stroke="#f8dc88" d="M1 5.5h1M3 5.5h1M5 5.5h1M7 5.5h1M9 5.5h1M2 6.5h1M4 6.5h1M6 6.5h1M8 6.5h1M10 6.5h1M1 7.5h1M3 7.5h1M5 7.5h1M7 7.5h1M9 7.5h1M2 8.5h1M4 8.5h1M6 8.5h1M8 8.5h1M1 9.5h1M3 9.5h1M5 9.5h1M7 9.5h1M2 10.5h1M4 10.5h1M6 10.5h1M8 10.5h1"/></svg>
<svg style="left:4px;top:303px;" width="12" height="12" viewBox="0 0 12 12" shape-rendering="crispEdges"><path stroke="#d8b860" d="M1 0.5h6M0 1.5h1M7 1.5h1M0 2.5h1M8 2.5h4M0 3.5h1M11 3.5h1M0 4.5h12M0 5.5h1M11 5.5h1M0 6.5h1M11 6.5h1M0 7.5h1M10 7.5h1M0 8.5h1M10 8.5h1M0 9.5h1M9 9.5h1M0 10.5h1M9 10.5h1M0 11.5h10"/><path stroke="#ffeea0" d="M1 1.5h6M1 2.5h7M1 3.5h10M2 5.5h1M4 5.5h1M6 5.5h1M8 5.5h1M10 5.5h1M1 6.5h1M3 6.5h1M5 6.5h1M7 6.5h1M9 6.5h1M2 7.5h1M4 7.5h1M6 7.5h1M8 7.5h1M1 8.5h1M3 8.5h1M5 8.5h1M7 8.5h1M9 8.5h1M2 9.5h1M4 9.5h1M6 9.5h1M8 9.5h1M1 10.5h1M3 10.5h1M5 10.5h1M7 10.5h1"/><path stroke="#f8dc88" d="M1 5.5h1M3 5.5h1M5 5.5h1M7 5.5h1M9 5.5h1M2 6.5h1M4 6.5h1M6 6.5h1M8 6.5h1M10 6.5h1M1 7.5h1M3 7.5h1M5 7.5h1M7 7.5h1M9 7.5h1M2 8.5h1M4 8.5h1M6 8.5h1M8 8.5h1M1 9.5h1M3 9.5h1M5 9.5h1M7 9.5h1M2 10.5h1M4 10.5h1M6 10.5h1M8 10.5h1"/></svg>
<svg style="left:4px;top:316px;" width="12" height="12" viewBox="0 0 12 12" shape-rendering="crispEdges"><path stroke="#d8b860" d="M1 0.5h5M0 1.5h1M7 1.5h1M0 2.5h1M8 2.5h4M0 3.5h1M11 3.5h1M0 4.5h1M11 4.5h1M0 5.5h1M11 5.5h1M0 6.5h1M11 6.5h1M0 7.5h1M11 7.5h1M0 8.5h1M11 8.5h1M0 9.5h1M11 9.5h1M0 10.5h1M11 10.5h1M0 11.5h12"/><path stroke="#ffeea0" d="M1 1.5h6M1 2.5h7M1 3.5h10M1 4.5h1M3 4.5h1M5 4.5h1M7 4.5h1M9 4.5h2M2 5.5h1M4 5.5h1M6 5.5h1M8 5.5h1M10 5.5h1M1 6.5h1M3 6.5h1M5 6.5h1M7 6.5h1M9 6.5h2M2 7.5h1M4 7.5h1M6 7.5h1M8 7.5h1M10 7.5h1M1 8.5h1M3 8.5h1M5 8.5h1M7 8.5h1M9 8.5h2M2 9.5h1M4 9.5h1M6 9.5h1M8 9.5h1M10 9.5h1M1 10.5h1M3 10.5h1M5 10.5h1M7 10.5h1M9 10.5h2"/><path stroke="#f8dc88" d="M2 4.5h1M4 4.5h1M6 4.5h1M8 4.5h1M1 5.5h1M3 5.5h1M5 5.5h1M7 5.5h1M9 5.5h1M2 6.5h1M4 6.5h1M6 6.5h1M8 6.5h1M1 7.5h1M3 7.5h1M5 7.5h1M7 7.5h1M9 7.5h1M2 8.5h1M4 8.5h1M6 8.5h1M8 8.5h1M1 9.5h1M3 9.5h1M5 9.5h1M7 9.5h1M9 9.5h1M2 10.5h1M4 10.5h1M6 10.5h1M8 10.5h1"/></svg>
<div class="a" style="left:335px;top:393px;width:1px;height:54px;background:#fff;"></div>
<div class="a" style="left:335px;top:393px;width:9px;height:1px;background:#fff;"></div>
<div class="a" style="left:335px;top:446px;width:9px;height:1px;background:#808080;"></div>
<svg style="left:337px;top:413px;" width="7" height="14" viewBox="0 0 7 14"><path d="M7 0v13l-7-6.500z" fill="#000080"/></svg>
<!-- MDI AREA -->
<div class="a" style="left:0px;top:134px;width:1366px;height:1px;background:#808080;"></div>
<div class="a" style="left:0px;top:135px;width:344px;height:1px;background:#fff;"></div>
<div class="a" style="left:344px;top:135px;width:1020px;height:569px;background:#808080;"></div>
<div class="a" style="left:1365px;top:135px;width:1px;height:570px;background:#fff;"></div>
<div class="a" style="left:345px;top:135px;width:1019px;height:1px;background:#404040;"></div>
<div class="a" style="left:345px;top:135px;width:1px;height:569px;background:#404040;"></div>
<div class="a" style="left:0px;top:704px;width:344px;height:1px;background:#808080;"></div>
<div class="a" style="left:0px;top:705px;width:1366px;height:1px;background:#fff;"></div>
<div class="a" style="left:456px;top:246px;width:842px;height:392px;background:#d4d0c8;border:1px solid;border-color:#d4d0c8 #404040 #404040 #d4d0c8;box-shadow:inset 1px 1px 0 #fff,inset -1px -1px 0 #808080"></div>
<div class="a" style="left:460px;top:250px;width:834px;height:18px;background:#0a246a;background:linear-gradient(90deg,#0a246a 0%,#a6caf0 100%);"></div>
<svg style="left:462px;top:251px;" width="16" height="15" viewBox="0 0 16 15" shape-rendering="crispEdges"><path stroke="#000" d="M0 0.5h15M0 1.5h1M14 1.5h1M0 2.5h1M14 2.5h1M0 3.5h1M14 3.5h1M0 4.5h1M14 4.5h1M0 5.5h1M14 5.5h1M0 6.5h1M14 6.5h1M0 7.5h1M14 7.5h1M0 8.5h1M14 8.5h1M0 9.5h1M12 9.5h3M0 10.5h1M10 10.5h3M0 11.5h1M10 11.5h1M0 12.5h1M10 12.5h1M0 13.5h1M3 13.5h2M8 13.5h3M1 14.5h2M5 14.5h3"/><path stroke="#fff" d="M1 1.5h13M1 2.5h1M5 2.5h2M8 2.5h2M13 2.5h1M1 3.5h2M4 3.5h2M7 3.5h1M9 3.5h2M12 3.5h2M1 4.5h2M4 4.5h2M7 4.5h1M9 4.5h2M12 4.5h2M1 5.5h1M5 5.5h2M8 5.5h2M13 5.5h1M1 6.5h13M1 7.5h13M1 8.5h2M1 9.5h11M1 10.5h9M1 11.5h2M9 11.5h1M1 12.5h9M1 13.5h2M5 13.5h3"/><path stroke="#207020" d="M15 1.5h1M15 2.5h1M15 3.5h1M15 4.5h1M15 5.5h1M15 6.5h1M15 7.5h1M3 8.5h11M15 8.5h1M13 10.5h1M3 11.5h6M11 11.5h2M11 12.5h1M11 13.5h1M4 14.5h1M8 14.5h2"/><path stroke="#c02020" d="M2 2.5h3M7 2.5h1M10 2.5h3M3 3.5h1M6 3.5h1M8 3.5h1M11 3.5h1M3 4.5h1M6 4.5h1M8 4.5h1M11 4.5h1M2 5.5h3M7 5.5h1M10 5.5h3"/></svg>
<div class="t" style="left:480px;top:253px;font-weight:bold;color:#fff;letter-spacing:0.48px;">10437.ols (Original), 390364, Hexdump *</div>
<div class="btn" style="left:1242px;top:252px;width:16px;height:14px;"></div>
<div class="btn" style="left:1258px;top:252px;width:16px;height:14px;"></div>
<div class="btn" style="left:1276px;top:252px;width:16px;height:14px;"></div>
<div class="a" style="left:1246px;top:261px;width:6px;height:2px;background:#000;"></div>
<svg style="left:1261px;top:254px;" width="9" height="9" viewBox="0 0 9 9" shape-rendering="crispEdges"><path d="M0 0h9v9h-9zM1 2v6h7v-6z" fill="#000" fill-rule="evenodd"/></svg>
<svg style="left:1280px;top:255px;" width="8" height="7" viewBox="0 0 8 7"><path d="M0 0h2l2 2.500l2-2.500h2l-3 3.500l3 3.500h-2l-2-2.500l-2 2.500h-2l3-3.500z" fill="#000"/></svg>
<div class="sunk" style="left:460px;top:269px;width:834px;height:365px;background:#000;"></div>
<div class="a" style="left:462px;top:271px;width:814px;height:345px;overflow:hidden;background:#000"><div class="a" style="left:72px;top:160px;width:312px;height:16px;background:#c0c0c0;"></div><div class="a" style="left:57px;top:160px;width:5px;height:16px;background:#fff;"></div><div class="a" style="left:464px;top:160px;width:104px;height:16px;background:#0000e0;"></div><div class="a" style="left:58px;top:0px;width:1px;height:345px;background:#c0c0c0;"></div><div class="a" style="left:60px;top:0px;width:1px;height:345px;background:#c0c0c0;"></div><div class="a" style="left:164px;top:0px;width:1px;height:345px;background:#484848;"></div><div class="a" style="left:261px;top:0px;width:1px;height:345px;background:#484848;"></div><div class="a" style="left:357px;top:0px;width:1px;height:345px;background:#484848;"></div><div class="a" style="left:459px;top:0px;width:1px;height:345px;background:#c8c8c8;"></div><div class="a" style="left:458px;top:160px;width:3px;height:16px;background:#fff;"></div><div class="a" style="left:459px;top:160px;width:1px;height:16px;background:#b0b0b0;"></div><svg style="left:457px;top:6px;" width="5" height="5" viewBox="0 0 5 5"><circle cx="2.500" cy="2.500" r="2.600" fill="#30e030"/></svg><div class="mono" style="left:1px;top:1px">1C6290</div><div class="mono" style="left:73px;top:1px">5B 5B 5A 5A 59 59 58 58 57 57 56 56 55 55 54 54</div><div class="mono" style="left:465px;top:1px">[[ZZYYXXWWVVUUTT</div><div class="mono" style="left:1px;top:17px">1C62A0</div><div class="mono" style="left:73px;top:17px">53 53 52 52 51 51 48 40 40 3F 3F 3F 3F 3F 3F 3F</div><div class="mono" style="left:465px;top:17px">SSRRQQH@@???????</div><div class="mono" style="left:1px;top:33px">1C62B0</div><div class="mono" style="left:73px;top:33px">3F 3E 3E 3E 3E 3E 3D 3D 3D 3D 3D 3C 3C 3C 3C 3C</div><div class="mono" style="left:465px;top:33px">?&gt;&gt;&gt;&gt;&gt;=====&lt;&lt;&lt;&lt;&lt;</div><div class="mono" style="left:1px;top:49px">1C62C0</div><div class="mono" style="left:73px;top:49px">3B 3B 3B 3B 3B 3A 3A 3A 3A 3A 39 39 39 39 39 39</div><div class="mono" style="left:465px;top:49px">;;;;;:::::999999</div><div class="mono" style="left:1px;top:65px">1C62D0</div><div class="mono" style="left:73px;top:65px">38 38 37 37 37 37 37 36 36 36 36 36 35 35 35 35</div><div class="mono" style="left:465px;top:65px">8877777666665555</div><div class="mono" style="left:1px;top:81px">1C62E0</div><div class="mono" style="left:73px;top:81px">35 34 34 34 34 34 34 33 33 32 32 32 32 32 31 31</div><div class="mono" style="left:465px;top:81px">5444444332222211</div><div class="mono" style="left:1px;top:97px">1C62F0</div><div class="mono" style="left:73px;top:97px">31 31 31 30 30 30 2F 2F 2F 2F 2F 2E 2E 2E 2D 2D</div><div class="mono" style="left:465px;top:97px">111000/////...--</div><div class="mono" style="left:1px;top:113px">1C6300</div><div class="mono" style="left:73px;top:113px">2D 2D 2D 2C 2C 2B 2B 2B 2B 2B 2A 2A 2A 29 29 29</div><div class="mono" style="left:465px;top:113px">---,,+++++***)))</div><div class="mono" style="left:1px;top:129px">1C6310</div><div class="mono" style="left:73px;top:129px">29 29 28 28 28 27 27 26 26 26 25 25 25 25 25 24</div><div class="mono" style="left:465px;top:129px">))(((''&amp;&amp;&amp;%%%%%$</div><div class="mono" style="left:1px;top:145px">1C6320</div><div class="mono" style="left:73px;top:145px">24 23 23 23 22 22 22 21 21 20 20 20 1F 1F 1E 1E</div><div class="mono" style="left:465px;top:145px">$###"""!!</div><div class="mono" style="left:1px;top:161px">1C6330</div><div class="mono" style="left:73px;top:161px"><span style="color:#6868c8">41 62 72 61 68 61 6D 20 45 64 67 61 72</span> 18 18 17</div><div class="mono" style="left:465px;top:161px;color:#fff">Abraham Edgar</div><div class="mono" style="left:1px;top:177px">1C6340</div><div class="mono" style="left:73px;top:177px">17 17 15 15 14 14 14 12 12 11 11 11 0F 0F 0F 0C</div><div class="mono" style="left:1px;top:193px">1C6350</div><div class="mono" style="left:73px;top:193px">0C 0A 0A 0A 06 06 01 50 50 50 50 50 50 50 50 50</div><div class="mono" style="left:465px;top:193px">       PPPPPPPPP</div><div class="mono" style="left:1px;top:209px">1C6360</div><div class="mono" style="left:73px;top:209px">50 50 50 50 50 50 50 50 50 50 50 50 50 50 50 50</div><div class="mono" style="left:465px;top:209px">PPPPPPPPPPPPPPPP</div><div class="mono" style="left:1px;top:225px">1C6370</div><div class="mono" style="left:73px;top:225px">50 50 50 50 50 50 50 50 50 50 50 50 50 50 50 50</div><div class="mono" style="left:465px;top:225px">PPPPPPPPPPPPPPPP</div><div class="mono" style="left:1px;top:241px">1C6380</div><div class="mono" style="left:73px;top:241px">50 50 50 50 4F 4F 4F 4A 4A 45 45 45 45 45 45 44</div><div class="mono" style="left:465px;top:241px">PPPPOOOJJEEEEEED</div><div class="mono" style="left:1px;top:257px">1C6390</div><div class="mono" style="left:73px;top:257px">44 44 44 44 43 43 43 43 43 42 42 42 42 42 41 41</div><div class="mono" style="left:465px;top:257px">DDDDCCCCCBBBBBAA</div><div class="mono" style="left:1px;top:273px">1C63A0</div><div class="mono" style="left:73px;top:273px">41 41 41 40 40 40 40 40 3F 3F 3F 3F 3F 3F 3F 3F</div><div class="mono" style="left:465px;top:273px">AAA@@@@@????????</div><div class="mono" style="left:1px;top:289px">1C63B0</div><div class="mono" style="left:73px;top:289px">3E 3E 3E 3E 3E 3D 3D 3D 3D 3D 3C 3C 3C 3C 3C 3B</div><div class="mono" style="left:465px;top:289px">&gt;&gt;&gt;&gt;&gt;=====&lt;&lt;&lt;&lt;&lt;;</div><div class="mono" style="left:1px;top:305px">1C63C0</div><div class="mono" style="left:73px;top:305px">3B 3B 3B 3B 3A 3A 3A 3A 3A 39 39 39 39 39 39 38</div><div class="mono" style="left:465px;top:305px">;;;;:::::9999998</div><div class="mono" style="left:1px;top:321px">1C63D0</div><div class="mono" style="left:73px;top:321px">38 37 37 37 37 37 36 36 36 36 36 35 35 35 35 35</div><div class="mono" style="left:465px;top:321px">8777776666655555</div><div class="mono" style="left:1px;top:337px">1C63E0</div><div class="mono" style="left:73px;top:337px">34 34 34 34 34 34 33 33 32 32 32 32 32 31 31 31</div><div class="mono" style="left:465px;top:337px">4444443322222111</div></div>
<div class="a" style="left:1276px;top:271px;width:16px;height:345px;background:#000080;"></div>
<div class="a" style="left:1278px;top:319px;width:12px;height:249px;background:#40409c;"></div>
<div class="vb" style="left:1276px;top:271px;width:16px;height:16px;"></div>
<div class="vb" style="left:1276px;top:287px;width:16px;height:16px;"></div>
<div class="vb" style="left:1276px;top:303px;width:16px;height:16px;"></div>
<div class="vb" style="left:1276px;top:568px;width:16px;height:16px;"></div>
<div class="vb" style="left:1276px;top:584px;width:16px;height:16px;"></div>
<div class="vb" style="left:1276px;top:600px;width:16px;height:16px;"></div>
<svg style="left:1280px;top:274px;" width="8" height="8" viewBox="0 0 8 8"><rect x="0" y="0" width="7" height="2" fill="#000"/><g transform="translate(0,3)"><path d="M3.500 0l3.500 4h-7z" fill="#000"/></g></svg>
<svg style="left:1280px;top:291px;" width="8" height="10" viewBox="0 0 8 10"><path d="M3.500 0l3.500 4h-7z" fill="#000"/><g transform="translate(0,5)"><path d="M3.500 0l3.500 4h-7z" fill="#000"/></g></svg>
<svg style="left:1280px;top:309px;" width="8" height="4" viewBox="0 0 8 4"><path d="M3.500 0l3.500 4h-7z" fill="#000"/></svg>
<svg style="left:1280px;top:574px;" width="8" height="4" viewBox="0 0 8 4"><path d="M0 0h7l-3.500 4z" fill="#000"/></svg>
<svg style="left:1280px;top:587px;" width="8" height="10" viewBox="0 0 8 10"><path d="M0 0h7l-3.500 4z" fill="#000"/><g transform="translate(0,5)"><path d="M0 0h7l-3.500 4z" fill="#000"/></g></svg>
<svg style="left:1280px;top:604px;" width="8" height="8" viewBox="0 0 8 8"><path d="M0 0h7l-3.500 4z" fill="#000"/><rect x="0" y="5" width="7" height="2" fill="#000"/></svg>
<div class="a" style="left:1277px;top:535px;width:14px;height:4px;background:#f0f0e4;"></div>
<div class="a" style="left:1278px;top:540px;width:12px;height:3px;background:#c07070;"></div>
<div class="a" style="left:1278px;top:543px;width:12px;height:1px;background:#903030;"></div>
<div class="a" style="left:1278px;top:544px;width:12px;height:3px;background:#a8a020;"></div>
<div class="a" style="left:1278px;top:547px;width:12px;height:1px;background:#903030;"></div>
<div class="a" style="left:1278px;top:548px;width:12px;height:2px;background:#a09030;"></div>
<div class="a" style="left:462px;top:616px;width:97px;height:16px;background:#808080;"></div>
<svg style="left:462px;top:616px;" width="97" height="16" viewBox="0 0 97 16"><polygon points="0,0 45,0 38,16 7,16" fill="#fff"/><polygon points="45,0 71,0 64,16 45,16 41.500,8" fill="#c0c0c0"/><polygon points="71,0 97,0 90,16 71,16 67.500,8" fill="#c0c0c0"/><path d="M45 0l-7 16M71 0l-7 16M97 0l-7 16M41.500 8l3.500 8M67.500 8l3.500 8M0 0l7 16" stroke="#000" stroke-width="0.800" fill="none"/></svg>
<div class="t" style="left:469px;top:618px;font-family:'Liberation Mono',monospace;font-weight:bold;font-size:12px;line-height:14px;"><span style="text-decoration:underline">T</span>ext</div>
<div class="t" style="left:510px;top:618px;font-family:'Liberation Mono',monospace;font-weight:bold;font-size:12px;line-height:14px;letter-spacing:-0.6px">2d</div>
<div class="t" style="left:536px;top:618px;font-family:'Liberation Mono',monospace;font-weight:bold;font-size:12px;line-height:14px;letter-spacing:-0.6px">3d</div>
<div class="sb" style="left:559px;top:616px;width:16px;height:16px;"></div>
<svg style="left:565px;top:620px;" width="4" height="8" viewBox="0 0 4 8"><path d="M4 0v7l-4-3.500z" fill="#000"/></svg>
<div class="sb" style="left:575px;top:616px;width:684px;height:16px;"></div>
<div class="a" style="left:1259px;top:616px;width:1px;height:16px;background:#fff;background-image:linear-gradient(#fff 50%,#d4d0c8 50%);background-size:1px 2px;"></div>
<div class="sb" style="left:1260px;top:616px;width:16px;height:16px;"></div>
<svg style="left:1266px;top:620px;" width="4" height="8" viewBox="0 0 4 8"><path d="M0 0v7l4-3.500z" fill="#000"/></svg>
<div class="a" style="left:1276px;top:616px;width:16px;height:16px;background:#c0c0c0;"></div>
<!-- STATUS BAR -->
<div class="t" style="left:2px;top:710px;letter-spacing:-0.12px;">Selection: 13</div>
<svg style="left:828px;top:710px;" width="10" height="11" viewBox="0 0 10 11"><path d="M0.500 0.500h9v3h-1.500v-1.500h-4l3 3.500l-3 3.500h4v-1.500h1.500v3h-9v-1.500l3.500-3.500l-3.500-3.500z" fill="none" stroke="#808080" stroke-width="1"/></svg>
<svg style="left:847px;top:710px;" width="12" height="12" viewBox="0 0 12 12"><circle cx="6" cy="6" r="3.400" fill="none" stroke="#808080" stroke-width="1.100"/><rect x="9.7" y="5.1" width="1.800" height="1.800" fill="#808080"/><rect x="8.4" y="8.4" width="1.800" height="1.800" fill="#808080"/><rect x="5.1" y="9.7" width="1.800" height="1.800" fill="#808080"/><rect x="1.8" y="8.4" width="1.800" height="1.800" fill="#808080"/><rect x="0.5" y="5.1" width="1.800" height="1.800" fill="#808080"/><rect x="1.8" y="1.8" width="1.800" height="1.800" fill="#808080"/><rect x="5.1" y="0.5" width="1.800" height="1.800" fill="#808080"/><rect x="8.4" y="1.8" width="1.800" height="1.800" fill="#808080"/></svg>
<svg style="left:866px;top:712px;" width="10" height="8" viewBox="0 0 10 8"><path d="M4 0.500l-3.500 3.500l3.500 3.500M6 0.500l3.500 3.500l-3.500 3.500M3 2.500h4M3 5.500h4" fill="none" stroke="#888" stroke-width="1.100"/></svg>
<div class="sunk1" style="left:883px;top:708px;width:86px;height:16px;"></div>
<div class="t" style="left:885px;top:710px;transform:scaleX(0.864);transform-origin:0 0;">No CS</div>
<svg style="left:981px;top:711px;" width="16" height="10" viewBox="0 0 16 10" shape-rendering="crispEdges"><path stroke="#000" d="M12 0.5h2M5 1.5h7M3 2.5h2M14 2.5h1M4 3.5h2M13 3.5h1M1 4.5h2M4 4.5h1M6 4.5h1M13 4.5h1M0 5.5h1M3 5.5h2M7 5.5h1M13 5.5h1M0 6.5h1M2 6.5h1M5 6.5h1M7 6.5h1M11 6.5h2M1 7.5h1M3 7.5h2M7 7.5h1M9 7.5h2M2 8.5h4M7 8.5h2M5 9.5h2"/></svg>
<div class="sunk1" style="left:1002px;top:708px;width:86px;height:16px;"></div>
<div class="t" style="left:1004px;top:710px;transform:scaleX(0.908);transform-origin:0 0;">No OLS-Module</div>
<div class="sunk1" style="left:1090px;top:708px;width:275px;height:16px;"></div>
<div class="t" style="left:1092px;top:710px;letter-spacing:0.11px;">Cursor: 1C633C =&gt; 72 (72) -&gt; 0 (0.00%), Width: 16</div>
<!-- TASKBAR -->
<div class="a" style="left:0px;top:725px;width:1366px;height:1px;background:#fff;"></div>
<div class="btn" style="left:2px;top:728px;width:52px;height:38px;"></div>
<svg style="left:5px;top:738px;" width="17" height="17" viewBox="0 0 17 17"><g transform="scale(1.120)"><path d="M1 2.500c2-1.500 4-1.500 6 0l-1.200 4.500c-2-1.300-4-1.300-6 0z" fill="#e8502a"/><path d="M8 2.800c2 1.300 4 1.300 6-0.300l-1.200 4.500c-2 1.500-4 1.500-6 0.300z" fill="#7ab648"/><path d="M-0.500 8c2-1.400 4-1.400 6 0l-1.200 4.500c-2-1.400-4-1.400-6 0z" fill="#3f8fd8"/><path d="M6.500 8.300c2 1.400 4 1.400 6-0.200l-1.200 4.500c-2 1.500-4 1.500-6 0.200z" fill="#f8c020"/></g></svg>
<div class="t" style="left:21px;top:741px;font-weight:bold;letter-spacing:0.67px;">Start</div>
<svg style="left:72px;top:730px;" width="31" height="32" viewBox="0 0 31 32"><defs><linearGradient id="ieg" x1="0" y1="0" x2="0.400" y2="1"><stop offset="0" stop-color="#8fdcfa"/><stop offset="0.500" stop-color="#3db4ee"/><stop offset="1" stop-color="#1c8ad2"/></linearGradient></defs><path d="M26.200 22.300a10.500 10.500 0 1 1 0.900-5.800h-20.500" fill="none" stroke="url(#ieg)" stroke-width="6.500"/><path d="M1.500 28.500c-4.500-5 4-19 17-25c6-2.800 11.500-2.300 10.500 2c0-2.200-3.500-2.400-8-0.400c-9.500 4.300-17.500 13.500-16 19.500c0.400 1.600 1.800 2.200 3.500 2c-2.500 2.200-5.500 3.200-7 1.900z" fill="#f4c61e"/></svg>
<div class="btn" style="left:113px;top:728px;width:48px;height:38px;"></div>
<div class="a" style="left:152px;top:729px;width:1px;height:36px;background:#808080;"></div>
<div class="a" style="left:153px;top:728px;width:1px;height:37px;background:#404040;"></div>
<div class="a" style="left:154px;top:729px;width:1px;height:35px;background:#fff;"></div>
<div class="a" style="left:156px;top:729px;width:1px;height:36px;background:#808080;"></div>
<div class="a" style="left:157px;top:728px;width:1px;height:37px;background:#404040;"></div>
<div class="a" style="left:158px;top:729px;width:1px;height:35px;background:#fff;"></div>
<svg style="left:117px;top:733px;" width="32" height="30" viewBox="0 0 32 30"><path d="M1 4h10l2 2h17v22h-29z" fill="#e8c86c"/><path d="M1 8h29v20h-29z" fill="#f8e4a0"/><path d="M1 8h29v2h-29z" fill="#fff6c8"/><rect x="4" y="2" width="4" height="3" fill="#30a030"/><rect x="13" y="4" width="4" height="3" fill="#d05028"/><rect x="22" y="5" width="4" height="3" fill="#3890b0"/><path d="M5 16h22v14h-5v-8h-12v8h-5z" fill="#8cc8f0" stroke="#4898d0" stroke-width="1"/><path d="M6 17h20v3h-20z" fill="#c8e8ff"/></svg>
<svg style="left:172px;top:732px;" width="30" height="30" viewBox="0 0 30 30"><defs><radialGradient id="ffg" cx="0.800" cy="0.200" r="1"><stop offset="0" stop-color="#fff36a"/><stop offset="0.300" stop-color="#ffc52e"/><stop offset="0.600" stop-color="#ff7a1a"/><stop offset="1" stop-color="#e31b5d"/></radialGradient></defs><path d="M15 1.500c1.500 1 2 2.500 4.500 3.500c-0.500-2 0-3.500 0.500-4.500c5.500 3 9.500 8 9.500 15c0 8-6.500 14.500-14.500 14.500s-14.500-6.500-14.500-14.500c0-4.500 2-8.500 5-11c-0.300 1.800 0 3 0.800 4c1.200-3.500 4.200-6 8.700-7z" fill="url(#ffg)"/><circle cx="15.500" cy="13" r="8" fill="#3a2fb8"/><circle cx="17" cy="10" r="4.500" fill="#2b6be0" opacity="0.800"/><path d="M6.500 9c2.500-1.500 5.500-1 7 1l3.500 0.500c1.500 0.500 1.500 2 0.500 3c-1.500 1.500-4 1-5 3c2.500 2.500 8 2 10.500-2.500c1.500 6-3 11.500-9 11.500s-11-6-7.500-16.500z" fill="#ff8a1e"/><path d="M4 12c-1 7 3 14 11 14c5 0 8-3 9-6c-3 4-9 5-13 1c-3-3-4-7-2-11z" fill="#f0402e" opacity="0.700"/></svg>
<div class="btn" style="left:213px;top:728px;width:48px;height:38px;"></div>
<svg style="left:222px;top:732px;" width="30" height="30" viewBox="0 0 30 30"><circle cx="15" cy="15" r="15" fill="#4caf50"/><path d="M15 15L2 7.500A15 15 0 0 1 28 7.500z" fill="#e8453c"/><path d="M15 0A15 15 0 0 1 28 7.500H15z" fill="#e8453c"/><path d="M28 7.500A15 15 0 0 1 13 29.900L15 15z" fill="#fcc934"/><path d="M15 15h13l-8 13z" fill="#fcc934"/><path d="M2 7.500L15 15l-2 14.900A15 15 0 0 1 2 7.500z" fill="#34a853"/><circle cx="15" cy="15" r="7" fill="#fff"/><circle cx="15" cy="15" r="5.500" fill="#4285f4"/></svg>
<div class="a" style="left:263px;top:728px;width:48px;height:38px;background:#fff;border:1px solid;border-color:#404040 #fff #fff #404040;box-shadow:inset 1px 1px 0 #808080"></div>
<svg style="left:271px;top:731px;" width="32" height="32" viewBox="0 0 32 32"><rect x="0" y="0" width="32" height="14" fill="#8cc8e8"/><rect x="0" y="14" width="32" height="18" fill="#38a038"/><path d="M4 14h8l3 18h-15z" fill="#101060"/><path d="M7.500 16v4M7 23v6" stroke="#fff" stroke-width="1"/><rect x="20.500" y="22" width="1.500" height="10" fill="#000"/><circle cx="21" cy="11.500" r="10" fill="#fff" stroke="#d01020" stroke-width="2.500"/><path d="M21 11.500c-2-2.800-3.200-3.600-5-3.600a3.600 3.600 0 0 0 0 7.200c1.800 0 3-0.800 5-3.600c2 2.800 3.200 3.600 5 3.600a3.600 3.600 0 0 0 0-7.200c-1.800 0-3 0.800-5 3.600z" fill="none" stroke="#000" stroke-width="2"/></svg>
<div class="btn" style="left:313px;top:728px;width:48px;height:38px;"></div>
<div class="a" style="left:321px;top:735px;width:32px;height:24px;background:#fff;"></div>
<svg style="left:321px;top:735px;" width="32" height="24" viewBox="0 0 32 24"><path d="M1 6h3.500v6h5v-6h3.500v16h-3.500v-7h-5v7h-3.500z" fill="#50a868"/><path d="M19 4c8-3 13 1 13 8s-5 11-13 9z" fill="#f0a030"/><path d="M22 8c4-1 6 1 6 4s-2 6-6 5z" fill="#f8d8a0"/><path d="M10 7l10 11M20 7l-10 11" stroke="#000" stroke-width="2.500"/></svg>
<div class="btn" style="left:363px;top:728px;width:48px;height:38px;"></div>
<div class="a" style="left:405px;top:729px;width:1px;height:36px;background:#808080;"></div>
<div class="a" style="left:406px;top:728px;width:1px;height:37px;background:#404040;"></div>
<div class="a" style="left:407px;top:729px;width:1px;height:35px;background:#fff;"></div>
<svg style="left:369px;top:731px;" width="32" height="32" viewBox="0 0 32 32"><path d="M2 20c-2-8 6-15 15-14c7 1 10 6 8 12c-1 4-5 3-6 6c-1 4 2 6-3 7c-7 1-12-4-14-11z" fill="#a8d0e8" stroke="#6898c0" stroke-width="1"/><circle cx="7" cy="16" r="2.200" fill="#e05040"/><circle cx="11" cy="11" r="2.200" fill="#50b050"/><circle cx="18" cy="10" r="2.200" fill="#f0c030"/><circle cx="13" cy="21" r="2" fill="#d8e8f0"/><path d="M30 2l-11 22l-2 6l4-4z" fill="#f09030"/><path d="M27 1l4 2l-3 5l-3-2z" fill="#c89868"/></svg>
<div class="t" style="left:1169px;top:739px;transform:scaleX(0.897);transform-origin:0 0;">EN</div>
<div class="a" style="left:1188px;top:734px;width:1px;height:22px;background:#808080;"></div>
<div class="a" style="left:1189px;top:734px;width:1px;height:22px;background:#fff;"></div>
<div class="sunk1" style="left:1192px;top:728px;width:172px;height:38px;"></div>
<svg style="left:1199px;top:741px;" width="6" height="8" viewBox="0 0 6 8"><path d="M0 3l3-3l3 3M0 7l3-3l3 3" fill="none" stroke="#000" stroke-width="1.500"/></svg>
<svg style="left:1218px;top:738px;" width="12" height="16" viewBox="0 0 12 16"><rect x="1" y="2" width="10" height="13" rx="2" fill="#f4f4f4" stroke="#606060" stroke-width="1.200"/><rect x="3.500" y="0.500" width="5" height="2" fill="#888" /><rect x="3" y="5" width="6" height="8" fill="#fff" stroke="#909090" stroke-width="0.800"/></svg>
<svg style="left:1239px;top:738px;" width="17" height="16" viewBox="0 0 17 16"><path d="M1 6h3l4-4v12l-4-4h-3z" fill="#e8e8e8" stroke="#707070" stroke-width="1"/><path d="M10 5c1.500 2 1.500 4 0 6M12 3c3 3 3 7 0 10M14 1.500c4 4 4 9 0 13" fill="none" stroke="#808080" stroke-width="1.200"/></svg>
<svg style="left:1263px;top:737px;" width="17" height="17" viewBox="0 0 17 17"><rect x="5" y="4" width="11" height="9" fill="#a0a0a0" stroke="#606060" stroke-width="1"/><rect x="6.500" y="5.500" width="8" height="6" fill="#c8c8c8"/><path d="M7 15.500h8M11 13v2" stroke="#606060" stroke-width="1.500"/><path d="M1.500 1v4h4v-4M3.500 5v9" fill="none" stroke="#404040" stroke-width="1.300"/><rect x="2" y="2" width="3" height="3" fill="#fff"/></svg>
<div class="t" style="left:1295px;top:733px;letter-spacing:-0.28px;">2:33 PM</div>
<div class="t" style="left:1290px;top:749px;letter-spacing:0.12px;">2/19/2019</div>
<svg style="left:1346px;top:741px;" width="15" height="12" viewBox="0 0 15 12"><rect x="0" y="0" width="15" height="11" fill="#3878d0"/><rect x="0" y="0" width="15" height="2" fill="#5898e8"/><rect x="0" y="9" width="15" height="2" fill="#183868"/><rect x="1" y="8" width="2" height="2" fill="#c8d8f0"/></svg>

</body></html>
